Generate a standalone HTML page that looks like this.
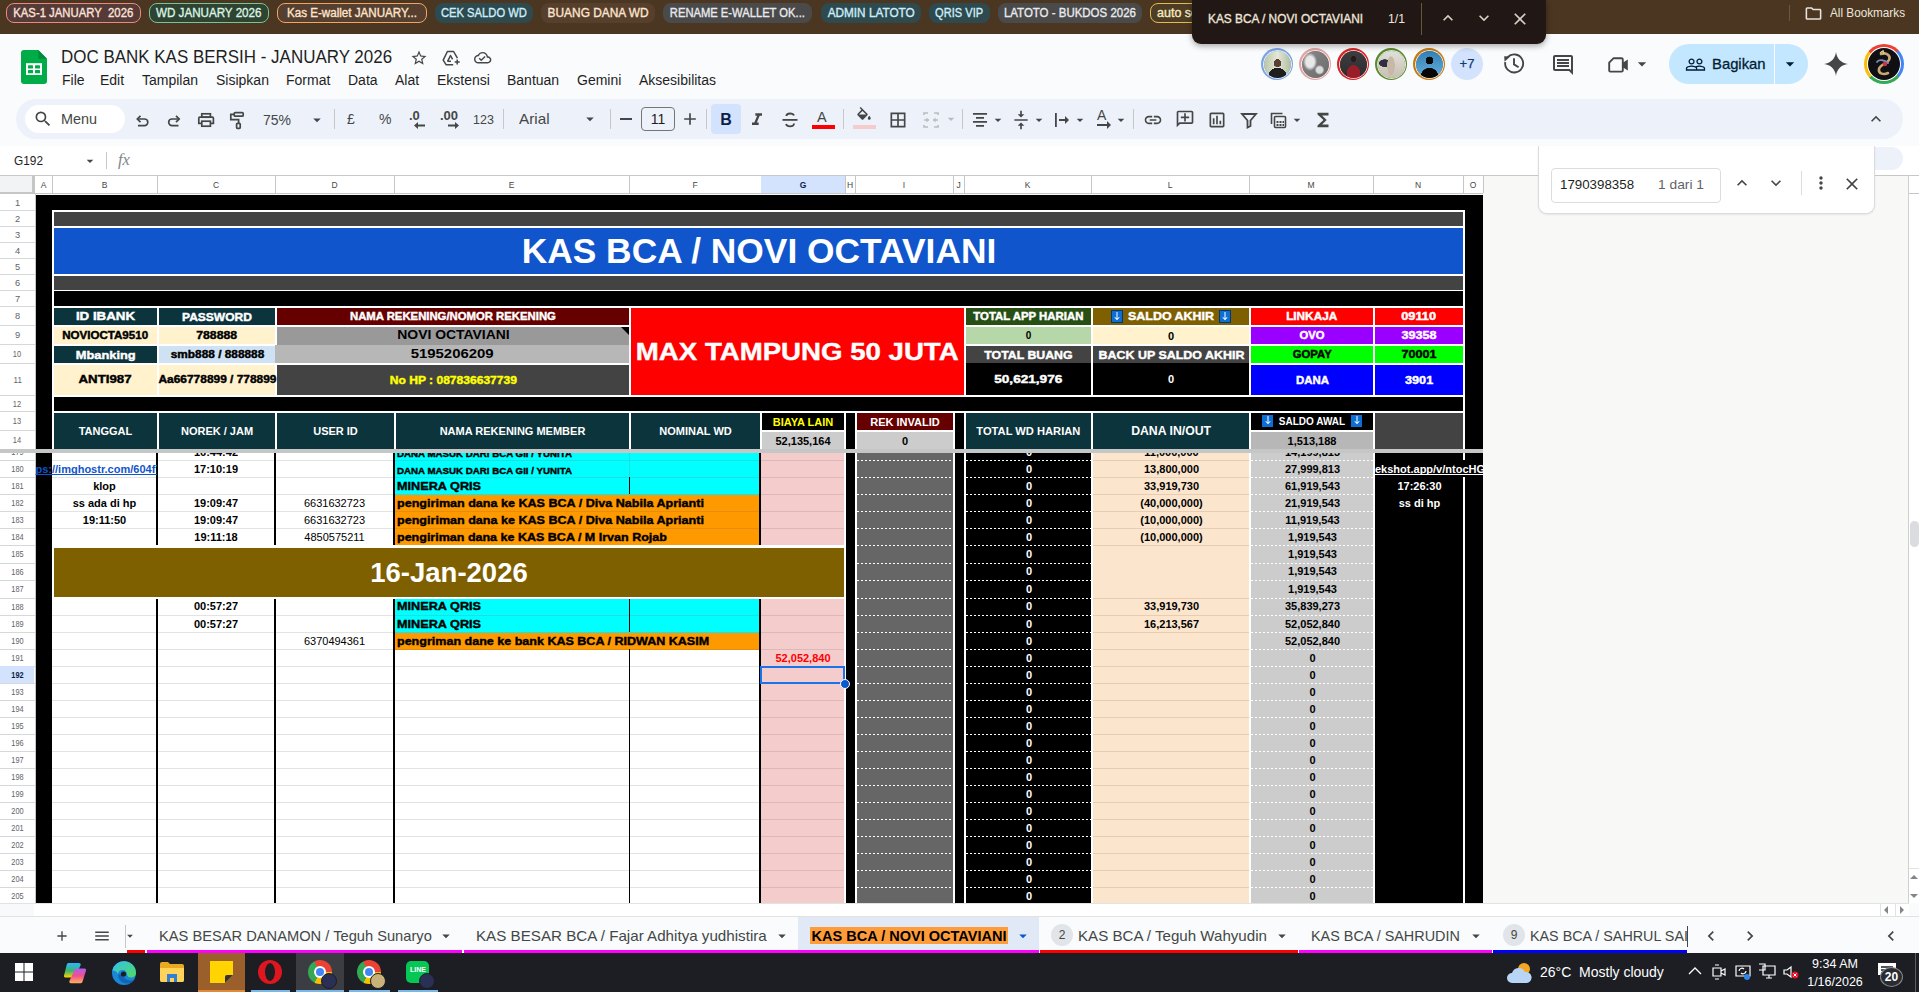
<!DOCTYPE html><html><head><meta charset="utf-8"><style>html,body{margin:0;padding:0}body{width:1919px;height:992px;overflow:hidden;position:relative;background:#f9fbfd;font-family:"Liberation Sans",sans-serif}body div,body svg{position:absolute}span{position:static}</style></head><body><div style="left:0px;top:0px;width:1919px;height:34px;background:#4b3621;"></div><div style="left:6px;top:3px;width:135px;height:20px;box-sizing:border-box;border-radius:8px;background:#563a37;border:1.5px solid #e98b7c;"></div><div style="left:6px;top:3px;width:135px;height:20px;display:flex;align-items:center;justify-content:center;font-size:12.5px;font-weight:normal;color:#fde3db;white-space:nowrap;-webkit-text-stroke:0.35px currentColor;"><span style="display:inline-block;transform:scaleX(0.906);transform-origin:center;">KAS-1 JANUARY  2026</span></div><div style="left:149px;top:3px;width:120px;height:20px;box-sizing:border-box;border-radius:8px;background:#2f4333;border:1.5px solid #78c493;"></div><div style="left:149px;top:3px;width:120px;height:20px;display:flex;align-items:center;justify-content:center;font-size:12.5px;font-weight:normal;color:#daf6e3;white-space:nowrap;-webkit-text-stroke:0.35px currentColor;"><span style="display:inline-block;transform:scaleX(0.930);transform-origin:center;">WD JANUARY 2026</span></div><div style="left:277px;top:3px;width:150px;height:20px;box-sizing:border-box;border-radius:8px;background:#563f2e;border:1.5px solid #f0a565;"></div><div style="left:277px;top:3px;width:150px;height:20px;display:flex;align-items:center;justify-content:center;font-size:12.5px;font-weight:normal;color:#fee5cf;white-space:nowrap;-webkit-text-stroke:0.35px currentColor;"><span style="display:inline-block;transform:scaleX(0.929);transform-origin:center;">Kas E-wallet JANUARY...</span></div><div style="left:435px;top:3px;width:98px;height:20px;box-sizing:border-box;border-radius:8px;background:#2e4a4e;"></div><div style="left:435px;top:3px;width:98px;height:20px;display:flex;align-items:center;justify-content:center;font-size:12.5px;font-weight:normal;color:#cdeefb;white-space:nowrap;-webkit-text-stroke:0.35px currentColor;"><span style="display:inline-block;transform:scaleX(0.897);transform-origin:center;">CEK SALDO WD</span></div><div style="left:541px;top:3px;width:114px;height:20px;box-sizing:border-box;border-radius:8px;background:#573f2d;"></div><div style="left:541px;top:3px;width:114px;height:20px;display:flex;align-items:center;justify-content:center;font-size:12.5px;font-weight:normal;color:#fee5cf;white-space:nowrap;-webkit-text-stroke:0.35px currentColor;"><span style="display:inline-block;transform:scaleX(0.951);transform-origin:center;">BUANG DANA WD</span></div><div style="left:663px;top:3px;width:149px;height:20px;box-sizing:border-box;border-radius:8px;background:#4a4a4a;"></div><div style="left:663px;top:3px;width:149px;height:20px;display:flex;align-items:center;justify-content:center;font-size:12.5px;font-weight:normal;color:#e9eaee;white-space:nowrap;-webkit-text-stroke:0.35px currentColor;"><span style="display:inline-block;transform:scaleX(0.896);transform-origin:center;">RENAME E-WALLET OK...</span></div><div style="left:821px;top:3px;width:100px;height:20px;box-sizing:border-box;border-radius:8px;background:#2e4a4e;"></div><div style="left:821px;top:3px;width:100px;height:20px;display:flex;align-items:center;justify-content:center;font-size:12.5px;font-weight:normal;color:#cdeefb;white-space:nowrap;-webkit-text-stroke:0.35px currentColor;"><span style="display:inline-block;transform:scaleX(0.942);transform-origin:center;">ADMIN LATOTO</span></div><div style="left:929px;top:3px;width:61px;height:20px;box-sizing:border-box;border-radius:8px;background:#2e4a4e;"></div><div style="left:929px;top:3px;width:61px;height:20px;display:flex;align-items:center;justify-content:center;font-size:12.5px;font-weight:normal;color:#cdeefb;white-space:nowrap;-webkit-text-stroke:0.35px currentColor;"><span style="display:inline-block;transform:scaleX(0.887);transform-origin:center;">QRIS VIP</span></div><div style="left:998px;top:3px;width:144px;height:20px;box-sizing:border-box;border-radius:8px;background:#4a4a4a;"></div><div style="left:998px;top:3px;width:144px;height:20px;display:flex;align-items:center;justify-content:center;font-size:12.5px;font-weight:normal;color:#e9eaee;white-space:nowrap;-webkit-text-stroke:0.35px currentColor;"><span style="display:inline-block;transform:scaleX(0.918);transform-origin:center;">LATOTO - BUKDOS 2026</span></div><div style="left:1150px;top:3px;width:90px;height:20px;box-sizing:border-box;border-radius:8px;background:#4c3d24;border:1.5px solid #e3bb4e;"></div><div style="left:1157px;top:4px;height:18px;line-height:18px;font-size:12.5px;font-weight:normal;color:#fbe9c0;white-space:nowrap;-webkit-text-stroke:0.35px currentColor;">auto sc</div><div style="left:1789px;top:5px;width:1px;height:16px;background:#6b5843;"></div><svg style="left:1803.5px;top:3.5px;" width="19" height="19" viewBox="0 0 24 24"><path fill="#e8e2da" d="M9.17 6l2 2H20v10H4V6h5.17M10 4H4c-1.1 0-1.99.9-1.99 2L2 18c0 1.1.9 2 2 2h16c1.1 0 2-.9 2-2V8c0-1.1-.9-2-2-2h-8l-2-2z"/></svg><div style="left:1830px;top:4px;height:18px;line-height:18px;font-size:13px;font-weight:normal;color:#ece6dd;white-space:nowrap;transform:scaleX(0.903);transform-origin:left center;">All Bookmarks</div><div style="left:0px;top:34px;width:1919px;height:112px;background:#f9fbfd;"></div><svg style="left:21px;top:50px" width="26" height="34" viewBox="0 0 26 34"><path d="M3 0h14.3L26 8.8V31a3 3 0 0 1-3 3H3a3 3 0 0 1-3-3V3a3 3 0 0 1 3-3z" fill="#00ac47"/><path d="M17.3 0L26 8.8h-8.7z" fill="#018b3a"/><rect x="5" y="13.2" width="16" height="11.8" fill="#fff"/><rect x="7" y="15.2" width="5" height="3.3" rx=".6" fill="#00ac47"/><rect x="14" y="15.2" width="5" height="3.3" rx=".6" fill="#00ac47"/><rect x="7" y="20" width="5" height="3.3" rx=".6" fill="#00ac47"/><rect x="14" y="20" width="5" height="3.3" rx=".6" fill="#00ac47"/></svg><div style="left:61px;top:45px;height:24px;line-height:24px;font-size:18px;font-weight:normal;color:#1f1f1f;white-space:nowrap;transform:scaleX(0.942);transform-origin:left center;">DOC BANK KAS BERSIH - JANUARY 2026</div><svg style="left:410.0px;top:48.8px;" width="18" height="18" viewBox="0 0 24 24"><path fill="#444746" d="M22 9.24l-7.19-.62L12 2 9.19 8.63 2 9.24l5.46 4.730L5.82 21 12 17.27 18.18 21l-1.63-7.03L22 9.24zM12 15.4l-3.76 2.27 1-4.28-3.32-2.88 4.38-.38L12 6.1l1.71 4.04 4.38.38-3.32 2.88 1 4.28L12 15.4z"/></svg><svg style="left:440px;top:47px" width="24" height="22" viewBox="440 47 24 22"><g fill="none" stroke="#444746" stroke-width="1.5" stroke-linejoin="round"><path d="M457.4 58.2L453.6 51.5H447.4L443.2 60.2L446.2 64.8H453.2"/><path d="M447.6 61.3L450.5 55.5L452.6 59.4"/><path d="M447.4 61.3H451"/><path d="M457.2 59.6V64.6M454.7 62.1H459.7"/></g></svg><svg style="left:474.3px;top:49.3px;" width="17.4" height="17.4" viewBox="0 0 24 24"><path fill="#444746" d="M19.35 10.04C18.67 6.59 15.64 4 12 4 9.11 4 6.6 5.64 5.35 8.04 2.34 8.36 0 10.91 0 14c0 3.31 2.69 6 6 6h13c2.76 0 5-2.24 5-5 0-2.64-2.05-4.78-4.65-4.96zM19 18H6c-2.21 0-4-1.79-4-4 0-2.05 1.53-3.76 3.56-3.97l1.07-.11.5-.95C8.080 7.14 9.94 6 12 6c2.62 0 4.88 1.86 5.39 4.43l.3 1.5 1.53.11c1.56.1 2.78 1.41 2.78 2.96 0 1.65-1.35 3-3 3zm-9-3.82l-2.09-2.09L6.5 13.5 10 17l6.01-6.01-1.41-1.41z"/></svg><div style="left:62px;top:71px;font-size:14px;color:#1f1f1f;line-height:18px;white-space:nowrap">File</div><div style="left:100px;top:71px;font-size:14px;color:#1f1f1f;line-height:18px;white-space:nowrap">Edit</div><div style="left:142px;top:71px;font-size:14px;color:#1f1f1f;line-height:18px;white-space:nowrap">Tampilan</div><div style="left:216px;top:71px;font-size:14px;color:#1f1f1f;line-height:18px;white-space:nowrap">Sisipkan</div><div style="left:286px;top:71px;font-size:14px;color:#1f1f1f;line-height:18px;white-space:nowrap">Format</div><div style="left:348px;top:71px;font-size:14px;color:#1f1f1f;line-height:18px;white-space:nowrap">Data</div><div style="left:395px;top:71px;font-size:14px;color:#1f1f1f;line-height:18px;white-space:nowrap">Alat</div><div style="left:437px;top:71px;font-size:14px;color:#1f1f1f;line-height:18px;white-space:nowrap">Ekstensi</div><div style="left:507px;top:71px;font-size:14px;color:#1f1f1f;line-height:18px;white-space:nowrap">Bantuan</div><div style="left:577px;top:71px;font-size:14px;color:#1f1f1f;line-height:18px;white-space:nowrap">Gemini</div><div style="left:639px;top:71px;font-size:14px;color:#1f1f1f;line-height:18px;white-space:nowrap">Aksesibilitas</div><div style="left:1261px;top:48px;width:32px;height:32px;border-radius:50%;background:#7ba5e6"></div><div style="left:1263.5px;top:50.5px;width:27px;height:27px;border-radius:50%;background:radial-gradient(ellipse 9px 8px at 50% 92%, #1e1e1e 0 98%, transparent 100%), radial-gradient(circle 4px at 50% 45%, #5a4030 0 95%, transparent 100%), linear-gradient(90deg,#b8c4a8,#e4e8d8 50%,#b0bca0);box-shadow:0 0 0 0.8px #fff"></div><div style="left:1299px;top:48px;width:32px;height:32px;border-radius:50%;background:#e3a3a3"></div><div style="left:1301.5px;top:50.5px;width:27px;height:27px;border-radius:50%;background:radial-gradient(ellipse 7px 9px at 30% 40%, #e8e8e8 0 60%, transparent 100%), radial-gradient(ellipse 5px 5px at 65% 70%, #dcdcdc 0 60%, transparent 100%), linear-gradient(135deg,#8a8a8a,#6a6a6a);box-shadow:0 0 0 0.8px #fff"></div><div style="left:1337px;top:48px;width:32px;height:32px;border-radius:50%;background:#d42424"></div><div style="left:1339.5px;top:50.5px;width:27px;height:27px;border-radius:50%;background:radial-gradient(ellipse 7px 9px at 50% 85%, #9a1e2a 0 95%, transparent 100%), radial-gradient(circle 3px at 50% 30%, #2a1a1a 0 95%, transparent 100%), linear-gradient(180deg,#3e3e42,#2c2c2e);box-shadow:0 0 0 0.8px #fff"></div><div style="left:1375px;top:48px;width:32px;height:32px;border-radius:50%;background:#5c8a2e"></div><div style="left:1377.5px;top:50.5px;width:27px;height:27px;border-radius:50%;background:radial-gradient(ellipse 4px 10px at 48% 55%, #c8b8a8 0 90%, transparent 100%), radial-gradient(ellipse 6px 4px at 25% 45%, #303040 0 90%, transparent 100%), linear-gradient(180deg,#e0e0dc,#c8c0b0);box-shadow:0 0 0 0.8px #fff"></div><div style="left:1413px;top:48px;width:32px;height:32px;border-radius:50%;background:#c47a12"></div><div style="left:1415.5px;top:50.5px;width:27px;height:27px;border-radius:50%;background:radial-gradient(ellipse 9px 9px at 50% 95%, #080808 0 95%, transparent 100%), radial-gradient(circle 4px at 50% 35%, #080808 0 95%, transparent 100%), linear-gradient(180deg,#2f7fb8,#6ab0d8);box-shadow:0 0 0 0.8px #fff"></div><div style="left:1451px;top:48px;width:32px;height:32px;border-radius:50%;background:#d3e3fd;color:#0b3a75;font-size:13px;-webkit-text-stroke:0.25px currentColor;line-height:32px;text-align:center">+7</div><svg style="left:1500px;top:50px" width="30" height="30" viewBox="1500 50 30 30"><g fill="none" stroke="#444746" stroke-width="1.9"><path d="M1505.2 62.2A9 9 0 1 0 1507.6 57.2"/><path d="M1514 58.2V64.4L1518.6 67.2"/></g><path fill="#444746" d="M1504.2 56.2L1510.2 56.4L1504.6 61.8z"/></svg><svg style="left:1551.0px;top:53.0px;" width="24" height="24" viewBox="0 0 24 24"><path fill="#444746" d="M21.99 4c0-1.1-.89-2-1.99-2H4c-1.1 0-2 .9-2 2v12c0 1.1.9 2 2 2h14l4 4-.01-18zM20 4v13.17L18.83 16H4V4h16zM6 12h12v2H6zm0-3h12v2H6zm0-3h12v2H6z"/></svg><svg style="left:1604px;top:54px" width="28" height="22" viewBox="1604 54 28 22"><path fill="none" stroke="#444746" stroke-width="1.9" stroke-linejoin="round" d="M1613.6 58.2H1621.6a1.2 1.2 0 0 1 1.2 1.2V70.4a1.2 1.2 0 0 1-1.2 1.2H1610.4a1.2 1.2 0 0 1-1.2-1.2V62.6z"/><path fill="#444746" d="M1622.8 62.8L1627.8 59.6V70.4L1622.8 67.2z"/></svg><svg style="left:1632.0px;top:54.0px;" width="20" height="20" viewBox="0 0 24 24"><path fill="#444746" d="M7 10l5 5 5-5z"/></svg><div style="left:1669px;top:44px;width:139px;height:40px;border-radius:20px;background:#c2e7ff"></div><div style="left:1774px;top:44px;width:1px;height:40px;background:#f9fbfd;"></div><svg style="left:1685.0px;top:53.5px;" width="21" height="21" viewBox="0 0 24 24"><path fill="#001d35" d="M16.5 13c-1.2 0-3.07.34-4.5 1-1.43-.67-3.3-1-4.5-1C5.33 13 1 14.08 1 16.25V19h22v-2.75c0-2.170-4.33-3.25-6.5-3.25zm-4 4.5h-10v-1.25c0-.54 2.56-1.75 5-1.75s5 1.21 5 1.75v1.25zm9 0H14v-1.25c0-.46-.2-.86-.52-1.22.88-.3 1.96-.53 3.02-.53 2.44 0 5 1.21 5 1.75v1.25zM7.5 12c1.93 0 3.5-1.57 3.5-3.5S9.43 5 7.5 5 4 6.57 4 8.5 5.57 12 7.5 12zm0-5.5c1.1 0 2 .9 2 2s-.9 2-2 2-2-.9-2-2 .9-2 2-2zm9 5.5c1.93 0 3.5-1.57 3.5-3.5S18.43 5 16.5 5 13 6.57 13 8.5s1.57 3.5 3.5 3.5zm0-5.5c1.1 0 2 .9 2 2s-.9 2-2 2-2-.9-2-2 .9-2 2-2z"/></svg><div style="left:1712px;top:54px;height:20px;line-height:20px;font-size:15px;font-weight:normal;color:#001d35;white-space:nowrap;transform:scaleX(0.988);transform-origin:left center;-webkit-text-stroke:0.3px currentColor;">Bagikan</div><svg style="left:1780.0px;top:54.0px;" width="20" height="20" viewBox="0 0 24 24"><path fill="#001d35" d="M7 10l5 5 5-5z"/></svg><svg style="left:1823px;top:51px" width="26" height="26" viewBox="0 0 24 24"><path fill="#444746" d="M12 1C12.6 7 17 11.4 23 12 17 12.6 12.6 17 12 23 11.4 17 7 12.6 1 12 7 11.4 11.4 7 12 1z"/></svg><div style="left:1864px;top:44px;width:40px;height:40px;border-radius:50%;background:conic-gradient(from -50deg,#ea4335 0 27%,#4285f4 27% 50%,#34a853 50% 77%,#fbbc04 77% 100%)"></div><div style="left:1867px;top:47px;width:34px;height:34px;border-radius:50%;background:#fff"></div><div style="left:1868px;top:48px;width:32px;height:32px;border-radius:50%;background:#101014"></div><svg style="left:1868px;top:48px" width="32" height="32" viewBox="0 0 32 32"><g fill="none" stroke="#c8a870" stroke-width="2.6" stroke-linecap="round"><path d="M13 6c6-2 10 2 8 6s-9 4-10 9 5 6 9 4"/><path d="M9 14c2-3 8-2 11 1" stroke="#7a8ab8" stroke-width="1.8"/></g><circle cx="17" cy="16" r="2.2" fill="#d03040"/><path d="M12 5l3-2 1 3" stroke="#e0c890" stroke-width="1.5" fill="none"/></svg><div style="left:1192px;top:0px;width:354px;height:44px;background:#211815;border-radius:0 0 9px 9px;box-shadow:0 2px 6px rgba(0,0,0,.35)"></div><div style="left:1208px;top:10px;height:18px;line-height:18px;font-size:13px;font-weight:normal;color:#efe6dc;white-space:nowrap;transform:scaleX(0.912);transform-origin:left center;-webkit-text-stroke:0.35px currentColor;">KAS BCA / NOVI OCTAVIANI</div><div style="left:1388px;top:10px;height:18px;line-height:18px;font-size:12.5px;font-weight:normal;color:#efe6dc;white-space:nowrap;transform:scaleX(0.978);transform-origin:left center;">1/1</div><div style="left:1421px;top:3px;width:1px;height:32px;background:#6b5535;"></div><svg style="left:1438.0px;top:8.0px;" width="20" height="20" viewBox="0 0 24 24"><path fill="#d9d0c6" d="M12 8l-6 6 1.41 1.41L12 10.83l4.59 4.58L18 14z"/></svg><svg style="left:1474.0px;top:8.0px;" width="20" height="20" viewBox="0 0 24 24"><path fill="#d9d0c6" d="M16.59 8.59L12 13.17 7.41 8.59 6 10l6 6 6-6z"/></svg><svg style="left:1510.0px;top:9.0px;" width="20" height="20" viewBox="0 0 24 24"><path fill="#d9d0c6" d="M19 6.41L17.59 5 12 10.59 6.41 5 5 6.41 10.59 12 5 17.59 6.41 19 12 13.41 17.59 19 19 17.59 13.41 12z"/></svg><div style="left:16px;top:99px;width:1887px;height:40px;border-radius:20px;background:#edf2fa"></div><div style="left:25px;top:105px;width:100px;height:28px;border-radius:14px;background:#fff"></div><svg style="left:33.0px;top:109.0px;" width="20" height="20" viewBox="0 0 24 24"><path fill="#444746" d="M15.5 14h-.79l-.28-.27A6.471 6.471 0 0 0 16 9.5 6.5 6.5 0 1 0 9.5 16c1.61 0 3.09-.59 4.23-1.57l.27.28v.79l5 4.99L20.49 19l-4.99-5zm-6 0C7.01 14 5 11.99 5 9.5S7.01 5 9.5 5 14 7.01 14 9.5 11.99 14 9.5 14z"/></svg><div style="left:61px;top:110px;height:18px;line-height:18px;font-size:14px;font-weight:normal;color:#444746;white-space:nowrap;transform:scaleX(1.029);transform-origin:left center;">Menu</div><svg style="left:130px;top:108px" width="120" height="24" viewBox="130 108 120 24"><g fill="none" stroke="#444746" stroke-width="1.7"><path d="M137.5 119H144.5a3.3 3.3 0 0 1 0 6.6H138"/><path d="M140.5 115.8L137.3 119l3.2 3.2"/><path d="M179 119H172a3.3 3.3 0 0 0 0 6.6H178.5"/><path d="M176 115.8L179.2 119 176 122.2"/><rect x="201.8" y="113.8" width="8.6" height="3.4"/><path d="M201.5 123.4H198.8V118.2a1 1 0 0 1 1-1H212.4a1 1 0 0 1 1 1V123.4H210.6"/><rect x="201.8" y="121.2" width="8.6" height="5"/><rect x="234.2" y="112.6" width="9" height="3.6" rx="1"/><path d="M234 114.4H230.8V119.6H238.6V123.2"/><rect x="236.6" y="123.4" width="3.6" height="5" rx="0.8"/></g></svg><div style="left:263px;top:111px;height:18px;line-height:18px;font-size:14px;font-weight:normal;color:#444746;white-space:nowrap;">75%</div><svg style="left:308.0px;top:111.0px;" width="18" height="18" viewBox="0 0 24 24"><path fill="#444746" d="M7 10l5 5 5-5z"/></svg><div style="left:334px;top:109px;width:1px;height:20px;background:#c7c7c7;"></div><div style="left:503px;top:109px;width:1px;height:20px;background:#c7c7c7;"></div><div style="left:610px;top:109px;width:1px;height:20px;background:#c7c7c7;"></div><div style="left:706px;top:109px;width:1px;height:20px;background:#c7c7c7;"></div><div style="left:843px;top:109px;width:1px;height:20px;background:#c7c7c7;"></div><div style="left:962px;top:109px;width:1px;height:20px;background:#c7c7c7;"></div><div style="left:1133px;top:109px;width:1px;height:20px;background:#c7c7c7;"></div><div style="left:347px;top:110px;font-size:14px;color:#444746;line-height:18px">£</div><div style="left:379px;top:110px;font-size:14px;color:#444746;line-height:18px">%</div><div style="left:409px;top:108px;font-size:13px;font-weight:bold;color:#444746;line-height:16px">.0</div><svg style="left:413px;top:121px" width="14" height="9" viewBox="0 0 14 9"><path fill="#444746" d="M1 4.5L5 1v2.5h7v2H5V8z"/></svg><div style="left:440px;top:108px;font-size:13px;font-weight:bold;color:#444746;line-height:16px">.00</div><svg style="left:446px;top:121px" width="14" height="9" viewBox="0 0 14 9"><path fill="#444746" d="M13 4.5L9 1v2.5H2v2h7V8z"/></svg><div style="left:473px;top:111px;font-size:12.5px;color:#444746;line-height:18px">123</div><div style="left:519px;top:110px;height:18px;line-height:18px;font-size:14.5px;font-weight:normal;color:#444746;white-space:nowrap;transform:scaleX(1.052);transform-origin:left center;">Arial</div><svg style="left:581.0px;top:110.0px;" width="18" height="18" viewBox="0 0 24 24"><path fill="#444746" d="M7 10l5 5 5-5z"/></svg><div style="left:620px;top:118px;width:12px;height:2px;background:#444746;"></div><div style="left:641px;top:107px;width:34px;height:24px;box-sizing:border-box;border:1px solid #747775;border-radius:4px;font-size:14px;color:#1f1f1f;line-height:22px;text-align:center">11</div><svg style="left:680.0px;top:109.0px;" width="20" height="20" viewBox="0 0 24 24"><path fill="#444746" d="M19 13h-6v6h-2v-6H5v-2h6V5h2v6h6v2z"/></svg><div style="left:711px;top:104px;width:30px;height:30px;border-radius:4px;background:#d3e3fd;color:#0b1f4a;font-size:16px;font-weight:bold;line-height:32px;text-align:center">B</div><svg style="left:747.0px;top:110.0px;" width="20" height="20" viewBox="0 0 24 24"><path fill="#444746" d="M10 4v3h2.21l-3.42 8H6v3h8v-3h-2.21l3.42-8H18V4z"/></svg><svg style="left:780px;top:110px" width="20" height="20" viewBox="0 0 20 20"><path fill="none" stroke="#444746" stroke-width="1.8" d="M14 5.5c-.5-1.2-2-2-4-2s-3.6 1-3.6 2.6M6 14c.4 1.4 2 2.4 4 2.4s4-1 4-2.8"/><rect x="2.5" y="9" width="15" height="1.8" fill="#444746"/></svg><div style="left:817px;top:108.5px;font-size:14.5px;color:#444746;line-height:16px">A</div><div style="left:812px;top:125px;width:23px;height:4px;background:#ff0000;"></div><svg style="left:855.0px;top:107.0px;" width="18" height="18" viewBox="0 0 24 24"><path fill="#444746" d="M16.56 8.94L7.62 0 6.21 1.41l2.38 2.38-5.15 5.15c-.59.59-.59 1.54 0 2.12l5.5 5.5c.29.29.68.44 1.06.44s.77-.15 1.06-.44l5.5-5.5c.59-.58.59-1.53 0-2.12zM5.21 10L10 5.21 14.79 10H5.21zM19 11.5s-2 2.17-2 3.5c0 1.1.9 2 2 2s2-.9 2-2c0-1.33-2-3.5-2-3.5z"/></svg><div style="left:853px;top:125px;width:23px;height:4px;background:#f4cccc;"></div><svg style="left:888.0px;top:110.0px;" width="20" height="20" viewBox="0 0 24 24"><path fill="#444746" d="M3 3v18h18V3H3zm8 16H5v-6h6v6zm0-8H5V5h6v6zm8 8h-6v-6h6v6zm0-8h-6V5h6v6z"/></svg><svg style="left:921px;top:110px" width="20" height="20" viewBox="0 0 20 20"><path fill="none" stroke="#b9bcbf" stroke-width="1.6" d="M3 5V3h4M3 15v2h4M17 5V3h-4M17 15v2h-4M3 10h5M17 10h-5"/><path fill="#b9bcbf" d="M8 10l-2.5-2.5v5zM12 10l2.5-2.5v5z"/></svg><svg style="left:943.0px;top:111.0px;" width="16" height="16" viewBox="0 0 24 24"><path fill="#b9bcbf" d="M7 10l5 5 5-5z"/></svg><svg style="left:970px;top:110px" width="20" height="20" viewBox="0 0 20 20"><path fill="#444746" d="M3 3h14v1.8H3zM6 7h8v1.8H6zM3 11h14v1.8H3zM6 15h8v1.8H6z"/></svg><svg style="left:990.0px;top:112.0px;" width="16" height="16" viewBox="0 0 24 24"><path fill="#444746" d="M7 10l5 5 5-5z"/></svg><svg style="left:1011.0px;top:110.0px;" width="20" height="20" viewBox="0 0 24 24"><path fill="#444746" d="M8 19h3v4h2v-4h3l-4-4-4 4zm8-14h-3V1h-2v4H8l4 4 4-4zM4 11v2h16v-2H4z"/></svg><svg style="left:1031.0px;top:112.0px;" width="16" height="16" viewBox="0 0 24 24"><path fill="#444746" d="M7 10l5 5 5-5z"/></svg><svg style="left:1052px;top:110px" width="20" height="20" viewBox="0 0 20 20"><path fill="#444746" d="M3 3h1.8v14H3zM7 9h6V6l4 4-4 4v-3H7z"/></svg><svg style="left:1072.0px;top:112.0px;" width="16" height="16" viewBox="0 0 24 24"><path fill="#444746" d="M7 10l5 5 5-5z"/></svg><div style="left:1097px;top:107px;font-size:14px;color:#444746;line-height:16px">A</div><svg style="left:1096px;top:121px" width="16" height="8" viewBox="0 0 16 8"><path fill="#444746" d="M1 3h10V0l4 4-4 4V5H1z"/></svg><svg style="left:1113.0px;top:112.0px;" width="16" height="16" viewBox="0 0 24 24"><path fill="#444746" d="M7 10l5 5 5-5z"/></svg><svg style="left:1143.0px;top:110.0px;" width="20" height="20" viewBox="0 0 24 24"><path fill="#444746" d="M3.9 12c0-1.71 1.39-3.1 3.1-3.1h4V7H7c-2.76 0-5 2.24-5 5s2.24 5 5 5h4v-1.9H7c-1.71 0-3.1-1.39-3.1-3.1zM8 13h8v-2H8v2zm9-6h-4v1.9h4c1.71 0 3.1 1.39 3.1 3.1s-1.39 3.1-3.1 3.1h-4V17h4c2.76 0 5-2.24 5-5s-2.24-5-5-5z"/></svg><svg style="left:1175.0px;top:109.0px;" width="20" height="20" viewBox="0 0 24 24"><path fill="#444746" d="M20 2H4c-1.1 0-2 .9-2 2v18l4-4h14c1.1 0 2-.9 2-2V4c0-1.1-.9-2-2-2zm0 14H5.17L4 17.17V4h16v12zM11 5h2v4h4v2h-4v4h-2v-4H7V9h4z"/></svg><svg style="left:1207.0px;top:110.0px;" width="20" height="20" viewBox="0 0 24 24"><path fill="#444746" d="M19 3H5c-1.1 0-2 .9-2 2v14c0 1.1.9 2 2 2h14c1.1 0 2-.9 2-2V5c0-1.1-.9-2-2-2zm0 16H5V5h14v14zM7 10h2v7H7zm4-3h2v10h-2zm4 6h2v4h-2z"/></svg><svg style="left:1239px;top:110px" width="20" height="20" viewBox="0 0 20 20"><path fill="none" stroke="#444746" stroke-width="1.8" d="M3 4h14l-5.5 6.5V16l-3 1.5v-7z"/></svg><svg style="left:1269px;top:110px" width="20" height="20" viewBox="0 0 20 20"><path fill="none" stroke="#444746" stroke-width="1.6" d="M2.5 14V3.5h11"/><rect x="5.5" y="6.5" width="11" height="11" rx="1" fill="none" stroke="#444746" stroke-width="1.6"/><path fill="#444746" d="M7.5 11h2v2h-2zM10.5 11h2v2h-2zM13.5 11h1.5v2h-1.5zM7.5 14h2v2h-2zM10.5 14h2v2h-2zM13.5 14h1.5v2h-1.5z"/></svg><svg style="left:1289.0px;top:112.0px;" width="16" height="16" viewBox="0 0 24 24"><path fill="#444746" d="M7 10l5 5 5-5z"/></svg><svg style="left:1312.0px;top:109.0px;" width="22" height="22" viewBox="0 0 24 24"><path fill="#444746" d="M18 4H6v2l6.5 6L6 18v2h12v-3h-7l5-5-5-5h7z"/></svg><svg style="left:1866.0px;top:109.0px;" width="20" height="20" viewBox="0 0 24 24"><path fill="#444746" d="M12 8l-6 6 1.41 1.41L12 10.83l4.59 4.58L18 14z"/></svg><div style="left:0px;top:146px;width:1919px;height:29px;background:#ffffff;"></div><div style="left:0px;top:175px;width:1919px;height:1px;background:#c7c7c7;"></div><div style="left:14px;top:152px;height:18px;line-height:18px;font-size:13.5px;font-weight:normal;color:#1f1f1f;white-space:nowrap;transform:scaleX(0.877);transform-origin:left center;">G192</div><svg style="left:82.0px;top:153.0px;" width="16" height="16" viewBox="0 0 24 24"><path fill="#444746" d="M7 10l5 5 5-5z"/></svg><div style="left:106px;top:152px;width:1px;height:17px;background:#c7c7c7;"></div><div style="left:118px;top:150px;font-size:16.5px;font-style:italic;color:#80868b;font-family:'Liberation Serif',serif;line-height:20px">fx</div><div style="left:1846px;top:147px;width:57px;height:23px;border-radius:0 12px 12px 0;background:#edf2fa"></div><div style="left:0px;top:176px;width:1909px;height:727px;background:#f8f9f7;"></div><div style="left:0px;top:176px;width:1483px;height:18px;background:#ffffff;"></div><div style="left:0px;top:176px;width:34px;height:18px;background:#f1f3f4;"></div><div style="left:32px;top:176px;width:3px;height:18px;background:#c4c7c5;"></div><div style="left:0px;top:192px;width:35px;height:2px;background:#c4c7c5;"></div><div style="left:35px;top:193px;width:1448px;height:1px;background:#c4c7c5;"></div><div style="left:52px;top:176px;width:1px;height:17px;background:#c4c7c5;"></div><div style="left:35px;top:176.5px;width:17px;height:17px;display:flex;align-items:center;justify-content:center;font-size:8.5px;font-weight:normal;color:#444746;white-space:nowrap;"><span style="display:inline-block;">A</span></div><div style="left:157px;top:176px;width:1px;height:17px;background:#c4c7c5;"></div><div style="left:52px;top:176.5px;width:105px;height:17px;display:flex;align-items:center;justify-content:center;font-size:8.5px;font-weight:normal;color:#444746;white-space:nowrap;"><span style="display:inline-block;">B</span></div><div style="left:275px;top:176px;width:1px;height:17px;background:#c4c7c5;"></div><div style="left:157px;top:176.5px;width:118px;height:17px;display:flex;align-items:center;justify-content:center;font-size:8.5px;font-weight:normal;color:#444746;white-space:nowrap;"><span style="display:inline-block;">C</span></div><div style="left:394px;top:176px;width:1px;height:17px;background:#c4c7c5;"></div><div style="left:275px;top:176.5px;width:119px;height:17px;display:flex;align-items:center;justify-content:center;font-size:8.5px;font-weight:normal;color:#444746;white-space:nowrap;"><span style="display:inline-block;">D</span></div><div style="left:629px;top:176px;width:1px;height:17px;background:#c4c7c5;"></div><div style="left:394px;top:176.5px;width:235px;height:17px;display:flex;align-items:center;justify-content:center;font-size:8.5px;font-weight:normal;color:#444746;white-space:nowrap;"><span style="display:inline-block;">E</span></div><div style="left:761px;top:176px;width:1px;height:17px;background:#c4c7c5;"></div><div style="left:629px;top:176.5px;width:132px;height:17px;display:flex;align-items:center;justify-content:center;font-size:8.5px;font-weight:normal;color:#444746;white-space:nowrap;"><span style="display:inline-block;">F</span></div><div style="left:761px;top:176px;width:84px;height:17px;background:#d3e3fd;"></div><div style="left:845px;top:176px;width:1px;height:17px;background:#c4c7c5;"></div><div style="left:761px;top:176.5px;width:84px;height:17px;display:flex;align-items:center;justify-content:center;font-size:8.5px;font-weight:bold;color:#0b1f4a;white-space:nowrap;"><span style="display:inline-block;">G</span></div><div style="left:855px;top:176px;width:1px;height:17px;background:#c4c7c5;"></div><div style="left:845px;top:176.5px;width:10px;height:17px;display:flex;align-items:center;justify-content:center;font-size:8.5px;font-weight:normal;color:#444746;white-space:nowrap;"><span style="display:inline-block;">H</span></div><div style="left:953px;top:176px;width:1px;height:17px;background:#c4c7c5;"></div><div style="left:855px;top:176.5px;width:98px;height:17px;display:flex;align-items:center;justify-content:center;font-size:8.5px;font-weight:normal;color:#444746;white-space:nowrap;"><span style="display:inline-block;">I</span></div><div style="left:964px;top:176px;width:1px;height:17px;background:#c4c7c5;"></div><div style="left:953px;top:176.5px;width:11px;height:17px;display:flex;align-items:center;justify-content:center;font-size:8.5px;font-weight:normal;color:#444746;white-space:nowrap;"><span style="display:inline-block;">J</span></div><div style="left:1091px;top:176px;width:1px;height:17px;background:#c4c7c5;"></div><div style="left:964px;top:176.5px;width:127px;height:17px;display:flex;align-items:center;justify-content:center;font-size:8.5px;font-weight:normal;color:#444746;white-space:nowrap;"><span style="display:inline-block;">K</span></div><div style="left:1249px;top:176px;width:1px;height:17px;background:#c4c7c5;"></div><div style="left:1091px;top:176.5px;width:158px;height:17px;display:flex;align-items:center;justify-content:center;font-size:8.5px;font-weight:normal;color:#444746;white-space:nowrap;"><span style="display:inline-block;">L</span></div><div style="left:1373px;top:176px;width:1px;height:17px;background:#c4c7c5;"></div><div style="left:1249px;top:176.5px;width:124px;height:17px;display:flex;align-items:center;justify-content:center;font-size:8.5px;font-weight:normal;color:#444746;white-space:nowrap;"><span style="display:inline-block;">M</span></div><div style="left:1463px;top:176px;width:1px;height:17px;background:#c4c7c5;"></div><div style="left:1373px;top:176.5px;width:90px;height:17px;display:flex;align-items:center;justify-content:center;font-size:8.5px;font-weight:normal;color:#444746;white-space:nowrap;"><span style="display:inline-block;">N</span></div><div style="left:1483px;top:176px;width:1px;height:17px;background:#c4c7c5;"></div><div style="left:1463px;top:176.5px;width:20px;height:17px;display:flex;align-items:center;justify-content:center;font-size:8.5px;font-weight:normal;color:#444746;white-space:nowrap;"><span style="display:inline-block;">O</span></div><div style="left:1909px;top:176px;width:10px;height:18px;background:#ffffff;"></div><div style="left:1908px;top:176px;width:1px;height:727px;background:#d0d0d0;"></div><div style="left:1909px;top:193px;width:10px;height:1px;background:#c4c7c5;"></div><div style="left:0px;top:194px;width:35px;height:709px;background:#ffffff;"></div><div style="left:34.5px;top:194px;width:1.5px;height:723px;background:#c4c7c5;"></div><div style="left:0px;top:210px;width:34.5px;height:1px;background:#d6d8da;"></div><div style="left:0px;top:194.5px;width:34.5px;height:16px;display:flex;align-items:center;justify-content:center;font-size:9px;font-weight:normal;color:#5f6368;white-space:nowrap;"><span style="display:inline-block;transform:scaleX(1.032);transform-origin:center;">1</span></div><div style="left:0px;top:226px;width:34.5px;height:1px;background:#d6d8da;"></div><div style="left:0px;top:210.5px;width:34.5px;height:16px;display:flex;align-items:center;justify-content:center;font-size:9px;font-weight:normal;color:#5f6368;white-space:nowrap;"><span style="display:inline-block;transform:scaleX(1.032);transform-origin:center;">2</span></div><div style="left:0px;top:242px;width:34.5px;height:1px;background:#d6d8da;"></div><div style="left:0px;top:226.5px;width:34.5px;height:16px;display:flex;align-items:center;justify-content:center;font-size:9px;font-weight:normal;color:#5f6368;white-space:nowrap;"><span style="display:inline-block;transform:scaleX(1.032);transform-origin:center;">3</span></div><div style="left:0px;top:258px;width:34.5px;height:1px;background:#d6d8da;"></div><div style="left:0px;top:242.5px;width:34.5px;height:16px;display:flex;align-items:center;justify-content:center;font-size:9px;font-weight:normal;color:#5f6368;white-space:nowrap;"><span style="display:inline-block;transform:scaleX(1.032);transform-origin:center;">4</span></div><div style="left:0px;top:274px;width:34.5px;height:1px;background:#d6d8da;"></div><div style="left:0px;top:258.5px;width:34.5px;height:16px;display:flex;align-items:center;justify-content:center;font-size:9px;font-weight:normal;color:#5f6368;white-space:nowrap;"><span style="display:inline-block;transform:scaleX(1.032);transform-origin:center;">5</span></div><div style="left:0px;top:290px;width:34.5px;height:1px;background:#d6d8da;"></div><div style="left:0px;top:274.5px;width:34.5px;height:16px;display:flex;align-items:center;justify-content:center;font-size:9px;font-weight:normal;color:#5f6368;white-space:nowrap;"><span style="display:inline-block;transform:scaleX(1.032);transform-origin:center;">6</span></div><div style="left:0px;top:306px;width:34.5px;height:1px;background:#d6d8da;"></div><div style="left:0px;top:290.5px;width:34.5px;height:16px;display:flex;align-items:center;justify-content:center;font-size:9px;font-weight:normal;color:#5f6368;white-space:nowrap;"><span style="display:inline-block;transform:scaleX(1.032);transform-origin:center;">7</span></div><div style="left:0px;top:325px;width:34.5px;height:1px;background:#d6d8da;"></div><div style="left:0px;top:306.5px;width:34.5px;height:19px;display:flex;align-items:center;justify-content:center;font-size:9px;font-weight:normal;color:#5f6368;white-space:nowrap;"><span style="display:inline-block;transform:scaleX(1.032);transform-origin:center;">8</span></div><div style="left:0px;top:344px;width:34.5px;height:1px;background:#d6d8da;"></div><div style="left:0px;top:325.5px;width:34.5px;height:19px;display:flex;align-items:center;justify-content:center;font-size:9px;font-weight:normal;color:#5f6368;white-space:nowrap;"><span style="display:inline-block;transform:scaleX(1.032);transform-origin:center;">9</span></div><div style="left:0px;top:363px;width:34.5px;height:1px;background:#d6d8da;"></div><div style="left:0px;top:344.5px;width:34.5px;height:19px;display:flex;align-items:center;justify-content:center;font-size:9px;font-weight:normal;color:#5f6368;white-space:nowrap;"><span style="display:inline-block;transform:scaleX(0.831);transform-origin:center;">10</span></div><div style="left:0px;top:395px;width:34.5px;height:1px;background:#d6d8da;"></div><div style="left:0px;top:363.5px;width:34.5px;height:32px;display:flex;align-items:center;justify-content:center;font-size:9px;font-weight:normal;color:#5f6368;white-space:nowrap;"><span style="display:inline-block;transform:scaleX(0.887);transform-origin:center;">11</span></div><div style="left:0px;top:411px;width:34.5px;height:1px;background:#d6d8da;"></div><div style="left:0px;top:395.5px;width:34.5px;height:16px;display:flex;align-items:center;justify-content:center;font-size:9px;font-weight:normal;color:#5f6368;white-space:nowrap;"><span style="display:inline-block;transform:scaleX(0.831);transform-origin:center;">12</span></div><div style="left:0px;top:430px;width:34.5px;height:1px;background:#d6d8da;"></div><div style="left:0px;top:411.5px;width:34.5px;height:19px;display:flex;align-items:center;justify-content:center;font-size:9px;font-weight:normal;color:#5f6368;white-space:nowrap;"><span style="display:inline-block;transform:scaleX(0.831);transform-origin:center;">13</span></div><div style="left:0px;top:449px;width:34.5px;height:1px;background:#d6d8da;"></div><div style="left:0px;top:430.5px;width:34.5px;height:19px;display:flex;align-items:center;justify-content:center;font-size:9px;font-weight:normal;color:#5f6368;white-space:nowrap;"><span style="display:inline-block;transform:scaleX(0.831);transform-origin:center;">14</span></div><div style="left:36px;top:195px;width:1447px;height:254px;background:#000000;"></div><div style="left:52px;top:210px;width:1413px;height:239px;background:#ffffff;"></div><div style="left:54px;top:212px;width:1409px;height:14px;background:#434343;"></div><div style="left:54px;top:228px;width:1409px;height:45.5px;background:#1155cc;"></div><div style="left:54px;top:228px;width:1409px;height:45.5px;display:flex;align-items:center;justify-content:center;font-size:35px;font-weight:bold;color:#fff;white-space:nowrap;"><span style="display:inline-block;transform:scaleX(1.010);transform-origin:center;">KAS BCA / NOVI OCTAVIANI</span></div><div style="left:54px;top:275.5px;width:1409px;height:14.0px;background:#434343;"></div><div style="left:54px;top:291px;width:1409px;height:15px;background:#000;"></div><div style="left:54px;top:308px;width:103px;height:17px;background:#0c343d;"></div><div style="left:54px;top:307.5px;width:103px;height:17px;display:flex;align-items:center;justify-content:center;font-size:11px;font-weight:bold;color:#fff;white-space:nowrap;"><span style="display:inline-block;transform:scaleX(1.208);transform-origin:center;-webkit-text-stroke:0.4px currentColor;">ID IBANK</span></div><div style="left:159px;top:308px;width:116px;height:17px;background:#0c343d;"></div><div style="left:159px;top:308px;width:116px;height:17px;display:flex;align-items:center;justify-content:center;font-size:11px;font-weight:bold;color:#fff;white-space:nowrap;"><span style="display:inline-block;transform:scaleX(1.093);transform-origin:center;-webkit-text-stroke:0.4px currentColor;">PASSWORD</span></div><div style="left:54px;top:327px;width:103px;height:17px;background:#fff2cc;"></div><div style="left:54px;top:327px;width:103px;height:17px;display:flex;align-items:center;justify-content:center;font-size:10px;font-weight:bold;color:#000;white-space:nowrap;"><span style="display:inline-block;transform:scaleX(1.157);transform-origin:center;-webkit-text-stroke:0.4px currentColor;">NOVIOCTA9510</span></div><div style="left:159px;top:327px;width:116px;height:17px;background:#fff2cc;"></div><div style="left:159px;top:327px;width:116px;height:17px;display:flex;align-items:center;justify-content:center;font-size:10px;font-weight:bold;color:#000;white-space:nowrap;"><span style="display:inline-block;transform:scaleX(1.228);transform-origin:center;-webkit-text-stroke:0.4px currentColor;">788888</span></div><div style="left:54px;top:346px;width:103px;height:17px;background:#0c343d;"></div><div style="left:54px;top:346px;width:103px;height:17px;display:flex;align-items:center;justify-content:center;font-size:11px;font-weight:bold;color:#fff;white-space:nowrap;"><span style="display:inline-block;transform:scaleX(1.168);transform-origin:center;-webkit-text-stroke:0.4px currentColor;">Mbanking</span></div><div style="left:159px;top:346px;width:116px;height:17px;background:#cfe2f3;"></div><div style="left:159px;top:346px;width:116px;height:17px;display:flex;align-items:center;justify-content:center;font-size:10px;font-weight:bold;color:#000;white-space:nowrap;"><span style="display:inline-block;transform:scaleX(1.185);transform-origin:center;-webkit-text-stroke:0.4px currentColor;">smb888 / 888888</span></div><div style="left:54px;top:365px;width:103px;height:29.5px;background:#fff2cc;"></div><div style="left:54px;top:364px;width:103px;height:29.5px;display:flex;align-items:center;justify-content:center;font-size:11px;font-weight:bold;color:#000;white-space:nowrap;"><span style="display:inline-block;transform:scaleX(1.205);transform-origin:center;-webkit-text-stroke:0.4px currentColor;">ANTI987</span></div><div style="left:159px;top:365px;width:116px;height:29.5px;background:#fff2cc;"></div><div style="left:159px;top:365px;width:116px;height:29.5px;display:flex;align-items:center;justify-content:center;font-size:10px;font-weight:bold;color:#000;white-space:nowrap;"><span style="display:inline-block;transform:scaleX(1.192);transform-origin:center;-webkit-text-stroke:0.4px currentColor;">Aa66778899 / 778899</span></div><div style="left:277px;top:308px;width:352px;height:17px;background:#660000;"></div><div style="left:277px;top:308px;width:352px;height:17px;display:flex;align-items:center;justify-content:center;font-size:10px;font-weight:bold;color:#fff;white-space:nowrap;"><span style="display:inline-block;transform:scaleX(1.132);transform-origin:center;-webkit-text-stroke:0.4px currentColor;">NAMA REKENING/NOMOR REKENING</span></div><div style="left:277px;top:327px;width:352px;height:18px;background:#999999;"></div><div style="left:277px;top:325px;width:352px;height:18px;display:flex;align-items:center;justify-content:center;font-size:13px;font-weight:bold;color:#000;white-space:nowrap;"><span style="display:inline-block;transform:scaleX(1.072);transform-origin:center;">NOVI OCTAVIANI</span></div><svg style="left:621px;top:327px" width="8" height="8" viewBox="0 0 8 8"><path d="M0 0h8v8z" fill="#000"/></svg><div style="left:275px;top:345px;width:354px;height:18px;background:#b7b7b7;"></div><div style="left:275px;top:344px;width:354px;height:18px;display:flex;align-items:center;justify-content:center;font-size:13px;font-weight:bold;color:#000;white-space:nowrap;"><span style="display:inline-block;transform:scaleX(1.148);transform-origin:center;">5195206209</span></div><div style="left:277px;top:365px;width:352px;height:29.5px;background:#434343;"></div><div style="left:277px;top:365px;width:352px;height:29.5px;display:flex;align-items:center;justify-content:center;font-size:10.5px;font-weight:bold;color:#ffff00;white-space:nowrap;"><span style="display:inline-block;transform:scaleX(1.148);transform-origin:center;-webkit-text-stroke:0.4px currentColor;">No HP : 087836637739</span></div><div style="left:631px;top:308px;width:333px;height:86.5px;background:#ff0000;"></div><div style="left:631px;top:309px;width:333px;height:86.5px;display:flex;align-items:center;justify-content:center;font-size:24px;font-weight:bold;color:#fff;white-space:nowrap;"><span style="display:inline-block;transform:scaleX(1.151);transform-origin:center;-webkit-text-stroke:0.4px currentColor;">MAX TAMPUNG 50 JUTA</span></div><div style="left:966px;top:308px;width:125px;height:17px;background:#274e13;"></div><div style="left:966px;top:308px;width:125px;height:17px;display:flex;align-items:center;justify-content:center;font-size:10px;font-weight:bold;color:#fff;white-space:nowrap;"><span style="display:inline-block;transform:scaleX(1.138);transform-origin:center;-webkit-text-stroke:0.4px currentColor;">TOTAL APP HARIAN</span></div><div style="left:966px;top:327px;width:125px;height:17px;background:#b6d7a8;"></div><div style="left:966px;top:327px;width:125px;height:17px;display:flex;align-items:center;justify-content:center;font-size:10px;font-weight:bold;color:#000;white-space:nowrap;"><span style="display:inline-block;">0</span></div><div style="left:966px;top:346px;width:125px;height:17px;background:#434343;"></div><div style="left:966px;top:346px;width:125px;height:17px;display:flex;align-items:center;justify-content:center;font-size:11px;font-weight:bold;color:#fff;white-space:nowrap;"><span style="display:inline-block;transform:scaleX(1.121);transform-origin:center;-webkit-text-stroke:0.4px currentColor;">TOTAL BUANG</span></div><div style="left:966px;top:363px;width:125px;height:31.5px;background:#000;"></div><div style="left:966px;top:363px;width:125px;height:31.5px;display:flex;align-items:center;justify-content:center;font-size:10.5px;font-weight:bold;color:#fff;white-space:nowrap;"><span style="display:inline-block;transform:scaleX(1.295);transform-origin:center;-webkit-text-stroke:0.4px currentColor;">50,621,976</span></div><div style="left:1093px;top:308px;width:156px;height:17px;background:#7f6000;"></div><div style="left:1093px;top:307px;width:156px;height:17px;display:flex;align-items:center;justify-content:center;font-size:11px;font-weight:bold;color:#fff;white-space:nowrap;"><span style="display:inline-block;transform:scaleX(1.131);transform-origin:center;-webkit-text-stroke:0.4px currentColor;">SALDO AKHIR</span></div><div style="left:1111px;top:310px;width:12px;height:13px;background:#0b6fd6;border:1px solid #06376b;box-sizing:border-box"></div><svg style="left:1114px;top:312px" width="6" height="9" viewBox="0 0 6 9"><path d="M2.5 0h1v6.5l1.5-1.5.6.6L3 8.2.4 5.6 1 5l1.5 1.5z" fill="#fff"/></svg><div style="left:1219px;top:310px;width:12px;height:13px;background:#0b6fd6;border:1px solid #06376b;box-sizing:border-box"></div><svg style="left:1222px;top:312px" width="6" height="9" viewBox="0 0 6 9"><path d="M2.5 0h1v6.5l1.5-1.5.6.6L3 8.2.4 5.6 1 5l1.5 1.5z" fill="#fff"/></svg><div style="left:1093px;top:327px;width:156px;height:17px;background:#fff2cc;"></div><div style="left:1093px;top:327px;width:156px;height:17px;display:flex;align-items:center;justify-content:center;font-size:11px;font-weight:bold;color:#000;white-space:nowrap;"><span style="display:inline-block;">0</span></div><div style="left:1093px;top:346px;width:156px;height:17px;background:#434343;"></div><div style="left:1093px;top:346px;width:156px;height:17px;display:flex;align-items:center;justify-content:center;font-size:11px;font-weight:bold;color:#fff;white-space:nowrap;"><span style="display:inline-block;transform:scaleX(1.132);transform-origin:center;-webkit-text-stroke:0.4px currentColor;">BACK UP SALDO AKHIR</span></div><div style="left:1093px;top:363px;width:156px;height:31.5px;background:#000;"></div><div style="left:1093px;top:363px;width:156px;height:31.5px;display:flex;align-items:center;justify-content:center;font-size:11px;font-weight:bold;color:#fff;white-space:nowrap;"><span style="display:inline-block;">0</span></div><div style="left:1251px;top:308px;width:122px;height:17px;background:#ff0000;"></div><div style="left:1251px;top:308px;width:122px;height:17px;display:flex;align-items:center;justify-content:center;font-size:10px;font-weight:bold;color:#fff;white-space:nowrap;"><span style="display:inline-block;transform:scaleX(1.178);transform-origin:center;-webkit-text-stroke:0.4px currentColor;">LINKAJA</span></div><div style="left:1375px;top:308px;width:88px;height:17px;background:#ff0000;"></div><div style="left:1375px;top:308px;width:88px;height:17px;display:flex;align-items:center;justify-content:center;font-size:10px;font-weight:bold;color:#fff;white-space:nowrap;"><span style="display:inline-block;transform:scaleX(1.282);transform-origin:center;-webkit-text-stroke:0.4px currentColor;">09110</span></div><div style="left:1251px;top:327px;width:122px;height:17px;background:#9900ff;"></div><div style="left:1251px;top:327px;width:122px;height:17px;display:flex;align-items:center;justify-content:center;font-size:10px;font-weight:bold;color:#fff;white-space:nowrap;"><span style="display:inline-block;transform:scaleX(1.126);transform-origin:center;-webkit-text-stroke:0.4px currentColor;">OVO</span></div><div style="left:1375px;top:327px;width:88px;height:17px;background:#9900ff;"></div><div style="left:1375px;top:327px;width:88px;height:17px;display:flex;align-items:center;justify-content:center;font-size:10px;font-weight:bold;color:#fff;white-space:nowrap;"><span style="display:inline-block;transform:scaleX(1.259);transform-origin:center;-webkit-text-stroke:0.4px currentColor;">39358</span></div><div style="left:1251px;top:346px;width:122px;height:17px;background:#00ff00;"></div><div style="left:1251px;top:346px;width:122px;height:17px;display:flex;align-items:center;justify-content:center;font-size:10px;font-weight:bold;color:#000;white-space:nowrap;"><span style="display:inline-block;transform:scaleX(1.130);transform-origin:center;-webkit-text-stroke:0.4px currentColor;">GOPAY</span></div><div style="left:1375px;top:346px;width:88px;height:17px;background:#00ff00;"></div><div style="left:1375px;top:346px;width:88px;height:17px;display:flex;align-items:center;justify-content:center;font-size:10px;font-weight:bold;color:#000;white-space:nowrap;"><span style="display:inline-block;transform:scaleX(1.259);transform-origin:center;-webkit-text-stroke:0.4px currentColor;">70001</span></div><div style="left:1251px;top:365px;width:122px;height:29.5px;background:#0000ff;"></div><div style="left:1251px;top:366px;width:122px;height:29.5px;display:flex;align-items:center;justify-content:center;font-size:10px;font-weight:bold;color:#fff;white-space:nowrap;"><span style="display:inline-block;transform:scaleX(1.142);transform-origin:center;-webkit-text-stroke:0.4px currentColor;">DANA</span></div><div style="left:1375px;top:365px;width:88px;height:29.5px;background:#0000ff;"></div><div style="left:1375px;top:366px;width:88px;height:29.5px;display:flex;align-items:center;justify-content:center;font-size:10px;font-weight:bold;color:#fff;white-space:nowrap;"><span style="display:inline-block;transform:scaleX(1.261);transform-origin:center;-webkit-text-stroke:0.4px currentColor;">3901</span></div><div style="left:54px;top:396.5px;width:1409px;height:14.5px;background:#000;"></div><div style="left:54px;top:413px;width:103px;height:36px;background:#0c343d;"></div><div style="left:54px;top:413px;width:103px;height:36px;display:flex;align-items:center;justify-content:center;font-size:11px;font-weight:bold;color:#fff;white-space:nowrap;"><span style="display:inline-block;">TANGGAL</span></div><div style="left:159px;top:413px;width:116px;height:36px;background:#0c343d;"></div><div style="left:159px;top:413px;width:116px;height:36px;display:flex;align-items:center;justify-content:center;font-size:11px;font-weight:bold;color:#fff;white-space:nowrap;"><span style="display:inline-block;">NOREK / JAM</span></div><div style="left:277px;top:413px;width:117px;height:36px;background:#0c343d;"></div><div style="left:277px;top:413px;width:117px;height:36px;display:flex;align-items:center;justify-content:center;font-size:11px;font-weight:bold;color:#fff;white-space:nowrap;"><span style="display:inline-block;">USER ID</span></div><div style="left:396px;top:413px;width:233px;height:36px;background:#0c343d;"></div><div style="left:396px;top:413px;width:233px;height:36px;display:flex;align-items:center;justify-content:center;font-size:11px;font-weight:bold;color:#fff;white-space:nowrap;"><span style="display:inline-block;">NAMA REKENING MEMBER</span></div><div style="left:631px;top:413px;width:129px;height:36px;background:#0c343d;"></div><div style="left:631px;top:413px;width:129px;height:36px;display:flex;align-items:center;justify-content:center;font-size:11px;font-weight:bold;color:#fff;white-space:nowrap;"><span style="display:inline-block;">NOMINAL WD</span></div><div style="left:762px;top:413px;width:82px;height:17px;background:#000000;"></div><div style="left:762px;top:413px;width:82px;height:17px;display:flex;align-items:center;justify-content:center;font-size:11px;font-weight:bold;color:#ffff00;white-space:nowrap;"><span style="display:inline-block;">BIAYA LAIN</span></div><div style="left:762px;top:432px;width:82px;height:17px;background:#cccccc;"></div><div style="left:762px;top:432px;width:82px;height:17px;display:flex;align-items:center;justify-content:center;font-size:11px;font-weight:bold;color:#000;white-space:nowrap;"><span style="display:inline-block;">52,135,164</span></div><div style="left:846px;top:413px;width:9px;height:36px;background:#000;"></div><div style="left:857px;top:413px;width:96px;height:17px;background:#660000;"></div><div style="left:857px;top:413px;width:96px;height:17px;display:flex;align-items:center;justify-content:center;font-size:11px;font-weight:bold;color:#fff;white-space:nowrap;"><span style="display:inline-block;">REK INVALID</span></div><div style="left:857px;top:432px;width:96px;height:17px;background:#cccccc;"></div><div style="left:857px;top:432px;width:96px;height:17px;display:flex;align-items:center;justify-content:center;font-size:11px;font-weight:bold;color:#000;white-space:nowrap;"><span style="display:inline-block;">0</span></div><div style="left:955px;top:413px;width:9px;height:36px;background:#000;"></div><div style="left:966px;top:413px;width:125px;height:36px;background:#0c343d;"></div><div style="left:966px;top:413px;width:125px;height:36px;display:flex;align-items:center;justify-content:center;font-size:11px;font-weight:bold;color:#fff;white-space:nowrap;"><span style="display:inline-block;transform:scaleX(1.013);transform-origin:center;">TOTAL WD HARIAN</span></div><div style="left:1093px;top:413px;width:156px;height:36px;background:#0c343d;"></div><div style="left:1093px;top:413px;width:156px;height:36px;display:flex;align-items:center;justify-content:center;font-size:12px;font-weight:bold;color:#fff;white-space:nowrap;"><span style="display:inline-block;transform:scaleX(1.022);transform-origin:center;">DANA IN/OUT</span></div><div style="left:1251px;top:413px;width:122px;height:17px;background:#000000;"></div><div style="left:1251px;top:413px;width:122px;height:17px;display:flex;align-items:center;justify-content:center;font-size:10px;font-weight:bold;color:#fff;white-space:nowrap;"><span style="display:inline-block;">SALDO AWAL</span></div><div style="left:1262px;top:415px;width:11px;height:12px;background:#0b6fd6;box-sizing:border-box"></div><svg style="left:1265px;top:416px" width="6" height="9" viewBox="0 0 6 9"><path d="M2.5 0h1v6.5l1.5-1.5.6.6L3 8.2.4 5.6 1 5l1.5 1.5z" fill="#fff"/></svg><div style="left:1351px;top:415px;width:11px;height:12px;background:#0b6fd6;box-sizing:border-box"></div><svg style="left:1354px;top:416px" width="6" height="9" viewBox="0 0 6 9"><path d="M2.5 0h1v6.5l1.5-1.5.6.6L3 8.2.4 5.6 1 5l1.5 1.5z" fill="#fff"/></svg><div style="left:1251px;top:432px;width:122px;height:17px;background:#b7b7b7;"></div><div style="left:1251px;top:432px;width:122px;height:17px;display:flex;align-items:center;justify-content:center;font-size:11px;font-weight:bold;color:#000;white-space:nowrap;"><span style="display:inline-block;">1,513,188</span></div><div style="left:1375px;top:413px;width:88px;height:36px;background:#434343;"></div><div style="left:0px;top:449px;width:1483px;height:4px;background:#c4c7c5;"></div><div style="left:0;top:453px;width:1909px;height:450px;overflow:hidden"><div style="left:0;top:-453px;width:1909px;height:992px"><div style="left:0px;top:460px;width:34.5px;height:1px;background:#d6d8da;"></div><div style="left:0px;top:443.5px;width:34.5px;height:17px;display:flex;align-items:center;justify-content:center;font-size:9px;font-weight:normal;color:#5f6368;white-space:nowrap;"><span style="display:inline-block;transform:scaleX(0.818);transform-origin:center;">179</span></div><div style="left:0px;top:477px;width:34.5px;height:1px;background:#d6d8da;"></div><div style="left:0px;top:460.5px;width:34.5px;height:17px;display:flex;align-items:center;justify-content:center;font-size:9px;font-weight:normal;color:#5f6368;white-space:nowrap;"><span style="display:inline-block;transform:scaleX(0.818);transform-origin:center;">180</span></div><div style="left:0px;top:494px;width:34.5px;height:1px;background:#d6d8da;"></div><div style="left:0px;top:477.5px;width:34.5px;height:17px;display:flex;align-items:center;justify-content:center;font-size:9px;font-weight:normal;color:#5f6368;white-space:nowrap;"><span style="display:inline-block;transform:scaleX(0.818);transform-origin:center;">181</span></div><div style="left:0px;top:511px;width:34.5px;height:1px;background:#d6d8da;"></div><div style="left:0px;top:494.5px;width:34.5px;height:17px;display:flex;align-items:center;justify-content:center;font-size:9px;font-weight:normal;color:#5f6368;white-space:nowrap;"><span style="display:inline-block;transform:scaleX(0.818);transform-origin:center;">182</span></div><div style="left:0px;top:528px;width:34.5px;height:1px;background:#d6d8da;"></div><div style="left:0px;top:511.5px;width:34.5px;height:17px;display:flex;align-items:center;justify-content:center;font-size:9px;font-weight:normal;color:#5f6368;white-space:nowrap;"><span style="display:inline-block;transform:scaleX(0.818);transform-origin:center;">183</span></div><div style="left:0px;top:545px;width:34.5px;height:1px;background:#d6d8da;"></div><div style="left:0px;top:528.5px;width:34.5px;height:17px;display:flex;align-items:center;justify-content:center;font-size:9px;font-weight:normal;color:#5f6368;white-space:nowrap;"><span style="display:inline-block;transform:scaleX(0.818);transform-origin:center;">184</span></div><div style="left:0px;top:562.5px;width:34.5px;height:1.0px;background:#d6d8da;"></div><div style="left:0px;top:545.5px;width:34.5px;height:17.5px;display:flex;align-items:center;justify-content:center;font-size:9px;font-weight:normal;color:#5f6368;white-space:nowrap;"><span style="display:inline-block;transform:scaleX(0.818);transform-origin:center;">185</span></div><div style="left:0px;top:580px;width:34.5px;height:1px;background:#d6d8da;"></div><div style="left:0px;top:563.0px;width:34.5px;height:17.5px;display:flex;align-items:center;justify-content:center;font-size:9px;font-weight:normal;color:#5f6368;white-space:nowrap;"><span style="display:inline-block;transform:scaleX(0.818);transform-origin:center;">186</span></div><div style="left:0px;top:597.5px;width:34.5px;height:1.0px;background:#d6d8da;"></div><div style="left:0px;top:580.5px;width:34.5px;height:17.5px;display:flex;align-items:center;justify-content:center;font-size:9px;font-weight:normal;color:#5f6368;white-space:nowrap;"><span style="display:inline-block;transform:scaleX(0.818);transform-origin:center;">187</span></div><div style="left:0px;top:615px;width:34.5px;height:1px;background:#d6d8da;"></div><div style="left:0px;top:598.0px;width:34.5px;height:17.5px;display:flex;align-items:center;justify-content:center;font-size:9px;font-weight:normal;color:#5f6368;white-space:nowrap;"><span style="display:inline-block;transform:scaleX(0.818);transform-origin:center;">188</span></div><div style="left:0px;top:632px;width:34.5px;height:1px;background:#d6d8da;"></div><div style="left:0px;top:615.5px;width:34.5px;height:17px;display:flex;align-items:center;justify-content:center;font-size:9px;font-weight:normal;color:#5f6368;white-space:nowrap;"><span style="display:inline-block;transform:scaleX(0.818);transform-origin:center;">189</span></div><div style="left:0px;top:649px;width:34.5px;height:1px;background:#d6d8da;"></div><div style="left:0px;top:632.5px;width:34.5px;height:17px;display:flex;align-items:center;justify-content:center;font-size:9px;font-weight:normal;color:#5f6368;white-space:nowrap;"><span style="display:inline-block;transform:scaleX(0.818);transform-origin:center;">190</span></div><div style="left:0px;top:666px;width:34.5px;height:1px;background:#d6d8da;"></div><div style="left:0px;top:649.5px;width:34.5px;height:17px;display:flex;align-items:center;justify-content:center;font-size:9px;font-weight:normal;color:#5f6368;white-space:nowrap;"><span style="display:inline-block;transform:scaleX(0.818);transform-origin:center;">191</span></div><div style="left:0px;top:666px;width:34px;height:17px;background:#d3e3fd;"></div><div style="left:0px;top:683px;width:34.5px;height:1px;background:#d6d8da;"></div><div style="left:0px;top:666.5px;width:34.5px;height:17px;display:flex;align-items:center;justify-content:center;font-size:9px;font-weight:bold;color:#0b1f4a;white-space:nowrap;"><span style="display:inline-block;transform:scaleX(0.818);transform-origin:center;">192</span></div><div style="left:0px;top:700px;width:34.5px;height:1px;background:#d6d8da;"></div><div style="left:0px;top:683.5px;width:34.5px;height:17px;display:flex;align-items:center;justify-content:center;font-size:9px;font-weight:normal;color:#5f6368;white-space:nowrap;"><span style="display:inline-block;transform:scaleX(0.818);transform-origin:center;">193</span></div><div style="left:0px;top:717px;width:34.5px;height:1px;background:#d6d8da;"></div><div style="left:0px;top:700.5px;width:34.5px;height:17px;display:flex;align-items:center;justify-content:center;font-size:9px;font-weight:normal;color:#5f6368;white-space:nowrap;"><span style="display:inline-block;transform:scaleX(0.818);transform-origin:center;">194</span></div><div style="left:0px;top:734px;width:34.5px;height:1px;background:#d6d8da;"></div><div style="left:0px;top:717.5px;width:34.5px;height:17px;display:flex;align-items:center;justify-content:center;font-size:9px;font-weight:normal;color:#5f6368;white-space:nowrap;"><span style="display:inline-block;transform:scaleX(0.818);transform-origin:center;">195</span></div><div style="left:0px;top:751px;width:34.5px;height:1px;background:#d6d8da;"></div><div style="left:0px;top:734.5px;width:34.5px;height:17px;display:flex;align-items:center;justify-content:center;font-size:9px;font-weight:normal;color:#5f6368;white-space:nowrap;"><span style="display:inline-block;transform:scaleX(0.818);transform-origin:center;">196</span></div><div style="left:0px;top:768px;width:34.5px;height:1px;background:#d6d8da;"></div><div style="left:0px;top:751.5px;width:34.5px;height:17px;display:flex;align-items:center;justify-content:center;font-size:9px;font-weight:normal;color:#5f6368;white-space:nowrap;"><span style="display:inline-block;transform:scaleX(0.818);transform-origin:center;">197</span></div><div style="left:0px;top:785px;width:34.5px;height:1px;background:#d6d8da;"></div><div style="left:0px;top:768.5px;width:34.5px;height:17px;display:flex;align-items:center;justify-content:center;font-size:9px;font-weight:normal;color:#5f6368;white-space:nowrap;"><span style="display:inline-block;transform:scaleX(0.818);transform-origin:center;">198</span></div><div style="left:0px;top:802px;width:34.5px;height:1px;background:#d6d8da;"></div><div style="left:0px;top:785.5px;width:34.5px;height:17px;display:flex;align-items:center;justify-content:center;font-size:9px;font-weight:normal;color:#5f6368;white-space:nowrap;"><span style="display:inline-block;transform:scaleX(0.818);transform-origin:center;">199</span></div><div style="left:0px;top:819px;width:34.5px;height:1px;background:#d6d8da;"></div><div style="left:0px;top:802.5px;width:34.5px;height:17px;display:flex;align-items:center;justify-content:center;font-size:9px;font-weight:normal;color:#5f6368;white-space:nowrap;"><span style="display:inline-block;transform:scaleX(0.818);transform-origin:center;">200</span></div><div style="left:0px;top:836px;width:34.5px;height:1px;background:#d6d8da;"></div><div style="left:0px;top:819.5px;width:34.5px;height:17px;display:flex;align-items:center;justify-content:center;font-size:9px;font-weight:normal;color:#5f6368;white-space:nowrap;"><span style="display:inline-block;transform:scaleX(0.818);transform-origin:center;">201</span></div><div style="left:0px;top:853px;width:34.5px;height:1px;background:#d6d8da;"></div><div style="left:0px;top:836.5px;width:34.5px;height:17px;display:flex;align-items:center;justify-content:center;font-size:9px;font-weight:normal;color:#5f6368;white-space:nowrap;"><span style="display:inline-block;transform:scaleX(0.818);transform-origin:center;">202</span></div><div style="left:0px;top:870px;width:34.5px;height:1px;background:#d6d8da;"></div><div style="left:0px;top:853.5px;width:34.5px;height:17px;display:flex;align-items:center;justify-content:center;font-size:9px;font-weight:normal;color:#5f6368;white-space:nowrap;"><span style="display:inline-block;transform:scaleX(0.818);transform-origin:center;">203</span></div><div style="left:0px;top:887px;width:34.5px;height:1px;background:#d6d8da;"></div><div style="left:0px;top:870.5px;width:34.5px;height:17px;display:flex;align-items:center;justify-content:center;font-size:9px;font-weight:normal;color:#5f6368;white-space:nowrap;"><span style="display:inline-block;transform:scaleX(0.818);transform-origin:center;">204</span></div><div style="left:0px;top:904px;width:34.5px;height:1px;background:#d6d8da;"></div><div style="left:0px;top:887.5px;width:34.5px;height:17px;display:flex;align-items:center;justify-content:center;font-size:9px;font-weight:normal;color:#5f6368;white-space:nowrap;"><span style="display:inline-block;transform:scaleX(0.818);transform-origin:center;">205</span></div><div style="left:36px;top:443px;width:16px;height:460px;background:#000;"></div><div style="left:52px;top:443px;width:577px;height:460px;background:#ffffff;"></div><div style="left:629px;top:443px;width:132px;height:460px;background:#ffffff;"></div><div style="left:761px;top:443px;width:84px;height:460px;background:#f4cccc;"></div><div style="left:845px;top:443px;width:12px;height:460px;background:#000;"></div><div style="left:855px;top:443px;width:2px;height:460px;background:#ffffff;"></div><div style="left:857px;top:443px;width:96px;height:460px;background:#666666;"></div><div style="left:953px;top:443px;width:2px;height:460px;background:#ffffff;"></div><div style="left:955px;top:443px;width:9px;height:460px;background:#000;"></div><div style="left:964px;top:443px;width:2px;height:460px;background:#ffffff;"></div><div style="left:966px;top:443px;width:125px;height:460px;background:#000;"></div><div style="left:1091px;top:443px;width:2px;height:460px;background:#ffffff;"></div><div style="left:1093px;top:443px;width:156px;height:460px;background:#fce5cd;"></div><div style="left:1249px;top:443px;width:2px;height:460px;background:#ffffff;"></div><div style="left:1251px;top:443px;width:122px;height:460px;background:#cccccc;"></div><div style="left:1373px;top:443px;width:2px;height:460px;background:#ffffff;"></div><div style="left:1375px;top:443px;width:88px;height:460px;background:#000;"></div><div style="left:1463px;top:443px;width:2px;height:17px;background:#ffffff;"></div><div style="left:1463px;top:460px;width:2px;height:17px;background:#000000;"></div><div style="left:1463px;top:477px;width:2px;height:426px;background:#ffffff;"></div><div style="left:1465px;top:443px;width:18px;height:460px;background:#000;"></div><div style="left:844px;top:443px;width:2px;height:460px;background:#ffffff;"></div><div style="left:394px;top:443px;width:366px;height:17px;background:#00ffff;"></div><div style="left:394px;top:460px;width:366px;height:17px;background:#00ffff;"></div><div style="left:394px;top:477px;width:366px;height:17px;background:#00ffff;"></div><div style="left:394px;top:597.5px;width:366px;height:17.5px;background:#00ffff;"></div><div style="left:394px;top:615px;width:366px;height:17px;background:#00ffff;"></div><div style="left:394px;top:494px;width:366px;height:17px;background:#ff9900;"></div><div style="left:394px;top:511px;width:366px;height:17px;background:#ff9900;"></div><div style="left:394px;top:528px;width:366px;height:17px;background:#ff9900;"></div><div style="left:394px;top:632px;width:366px;height:17px;background:#ff9900;"></div><div style="left:52px;top:460px;width:342px;height:1px;background:#e2e3e3;"></div><div style="left:394px;top:460px;width:366px;height:1px;background:#1ee0e0;"></div><div style="left:761px;top:460px;width:83px;height:1px;background:#dcb8b8;"></div><div style="left:1093px;top:460px;width:156px;height:1px;background:#e6cdb3;"></div><div style="left:52px;top:477px;width:342px;height:1px;background:#e2e3e3;"></div><div style="left:394px;top:477px;width:366px;height:1px;background:#1ee0e0;"></div><div style="left:761px;top:477px;width:83px;height:1px;background:#dcb8b8;"></div><div style="left:1093px;top:477px;width:156px;height:1px;background:#e6cdb3;"></div><div style="left:52px;top:494px;width:342px;height:1px;background:#e2e3e3;"></div><div style="left:394px;top:494px;width:366px;height:1px;background:#1ee0e0;"></div><div style="left:761px;top:494px;width:83px;height:1px;background:#dcb8b8;"></div><div style="left:1093px;top:494px;width:156px;height:1px;background:#e6cdb3;"></div><div style="left:52px;top:511px;width:342px;height:1px;background:#e2e3e3;"></div><div style="left:394px;top:511px;width:366px;height:1px;background:#e68c10;"></div><div style="left:761px;top:511px;width:83px;height:1px;background:#dcb8b8;"></div><div style="left:1093px;top:511px;width:156px;height:1px;background:#e6cdb3;"></div><div style="left:52px;top:528px;width:342px;height:1px;background:#e2e3e3;"></div><div style="left:394px;top:528px;width:366px;height:1px;background:#e68c10;"></div><div style="left:761px;top:528px;width:83px;height:1px;background:#dcb8b8;"></div><div style="left:1093px;top:528px;width:156px;height:1px;background:#e6cdb3;"></div><div style="left:52px;top:545px;width:342px;height:1px;background:#e2e3e3;"></div><div style="left:394px;top:545px;width:366px;height:1px;background:#e68c10;"></div><div style="left:761px;top:545px;width:83px;height:1px;background:#dcb8b8;"></div><div style="left:1093px;top:545px;width:156px;height:1px;background:#e6cdb3;"></div><div style="left:52px;top:597.5px;width:342px;height:1.0px;background:#e2e3e3;"></div><div style="left:394px;top:597.5px;width:366px;height:1.0px;background:#e2e3e3;"></div><div style="left:761px;top:597.5px;width:83px;height:1.0px;background:#dcb8b8;"></div><div style="left:1093px;top:597.5px;width:156px;height:1.0px;background:#e6cdb3;"></div><div style="left:52px;top:615px;width:342px;height:1px;background:#e2e3e3;"></div><div style="left:394px;top:615px;width:366px;height:1px;background:#1ee0e0;"></div><div style="left:761px;top:615px;width:83px;height:1px;background:#dcb8b8;"></div><div style="left:1093px;top:615px;width:156px;height:1px;background:#e6cdb3;"></div><div style="left:52px;top:632px;width:342px;height:1px;background:#e2e3e3;"></div><div style="left:394px;top:632px;width:366px;height:1px;background:#1ee0e0;"></div><div style="left:761px;top:632px;width:83px;height:1px;background:#dcb8b8;"></div><div style="left:1093px;top:632px;width:156px;height:1px;background:#e6cdb3;"></div><div style="left:52px;top:649px;width:342px;height:1px;background:#e2e3e3;"></div><div style="left:394px;top:649px;width:366px;height:1px;background:#e68c10;"></div><div style="left:761px;top:649px;width:83px;height:1px;background:#dcb8b8;"></div><div style="left:1093px;top:649px;width:156px;height:1px;background:#e6cdb3;"></div><div style="left:52px;top:666px;width:342px;height:1px;background:#e2e3e3;"></div><div style="left:394px;top:666px;width:366px;height:1px;background:#e2e3e3;"></div><div style="left:761px;top:666px;width:83px;height:1px;background:#dcb8b8;"></div><div style="left:1093px;top:666px;width:156px;height:1px;background:#e6cdb3;"></div><div style="left:52px;top:683px;width:342px;height:1px;background:#e2e3e3;"></div><div style="left:394px;top:683px;width:366px;height:1px;background:#e2e3e3;"></div><div style="left:761px;top:683px;width:83px;height:1px;background:#dcb8b8;"></div><div style="left:1093px;top:683px;width:156px;height:1px;background:#e6cdb3;"></div><div style="left:52px;top:700px;width:342px;height:1px;background:#e2e3e3;"></div><div style="left:394px;top:700px;width:366px;height:1px;background:#e2e3e3;"></div><div style="left:761px;top:700px;width:83px;height:1px;background:#dcb8b8;"></div><div style="left:1093px;top:700px;width:156px;height:1px;background:#e6cdb3;"></div><div style="left:52px;top:717px;width:342px;height:1px;background:#e2e3e3;"></div><div style="left:394px;top:717px;width:366px;height:1px;background:#e2e3e3;"></div><div style="left:761px;top:717px;width:83px;height:1px;background:#dcb8b8;"></div><div style="left:1093px;top:717px;width:156px;height:1px;background:#e6cdb3;"></div><div style="left:52px;top:734px;width:342px;height:1px;background:#e2e3e3;"></div><div style="left:394px;top:734px;width:366px;height:1px;background:#e2e3e3;"></div><div style="left:761px;top:734px;width:83px;height:1px;background:#dcb8b8;"></div><div style="left:1093px;top:734px;width:156px;height:1px;background:#e6cdb3;"></div><div style="left:52px;top:751px;width:342px;height:1px;background:#e2e3e3;"></div><div style="left:394px;top:751px;width:366px;height:1px;background:#e2e3e3;"></div><div style="left:761px;top:751px;width:83px;height:1px;background:#dcb8b8;"></div><div style="left:1093px;top:751px;width:156px;height:1px;background:#e6cdb3;"></div><div style="left:52px;top:768px;width:342px;height:1px;background:#e2e3e3;"></div><div style="left:394px;top:768px;width:366px;height:1px;background:#e2e3e3;"></div><div style="left:761px;top:768px;width:83px;height:1px;background:#dcb8b8;"></div><div style="left:1093px;top:768px;width:156px;height:1px;background:#e6cdb3;"></div><div style="left:52px;top:785px;width:342px;height:1px;background:#e2e3e3;"></div><div style="left:394px;top:785px;width:366px;height:1px;background:#e2e3e3;"></div><div style="left:761px;top:785px;width:83px;height:1px;background:#dcb8b8;"></div><div style="left:1093px;top:785px;width:156px;height:1px;background:#e6cdb3;"></div><div style="left:52px;top:802px;width:342px;height:1px;background:#e2e3e3;"></div><div style="left:394px;top:802px;width:366px;height:1px;background:#e2e3e3;"></div><div style="left:761px;top:802px;width:83px;height:1px;background:#dcb8b8;"></div><div style="left:1093px;top:802px;width:156px;height:1px;background:#e6cdb3;"></div><div style="left:52px;top:819px;width:342px;height:1px;background:#e2e3e3;"></div><div style="left:394px;top:819px;width:366px;height:1px;background:#e2e3e3;"></div><div style="left:761px;top:819px;width:83px;height:1px;background:#dcb8b8;"></div><div style="left:1093px;top:819px;width:156px;height:1px;background:#e6cdb3;"></div><div style="left:52px;top:836px;width:342px;height:1px;background:#e2e3e3;"></div><div style="left:394px;top:836px;width:366px;height:1px;background:#e2e3e3;"></div><div style="left:761px;top:836px;width:83px;height:1px;background:#dcb8b8;"></div><div style="left:1093px;top:836px;width:156px;height:1px;background:#e6cdb3;"></div><div style="left:52px;top:853px;width:342px;height:1px;background:#e2e3e3;"></div><div style="left:394px;top:853px;width:366px;height:1px;background:#e2e3e3;"></div><div style="left:761px;top:853px;width:83px;height:1px;background:#dcb8b8;"></div><div style="left:1093px;top:853px;width:156px;height:1px;background:#e6cdb3;"></div><div style="left:52px;top:870px;width:342px;height:1px;background:#e2e3e3;"></div><div style="left:394px;top:870px;width:366px;height:1px;background:#e2e3e3;"></div><div style="left:761px;top:870px;width:83px;height:1px;background:#dcb8b8;"></div><div style="left:1093px;top:870px;width:156px;height:1px;background:#e6cdb3;"></div><div style="left:52px;top:887px;width:342px;height:1px;background:#e2e3e3;"></div><div style="left:394px;top:887px;width:366px;height:1px;background:#e2e3e3;"></div><div style="left:761px;top:887px;width:83px;height:1px;background:#dcb8b8;"></div><div style="left:1093px;top:887px;width:156px;height:1px;background:#e6cdb3;"></div><div style="left:52px;top:904px;width:342px;height:1px;background:#e2e3e3;"></div><div style="left:394px;top:904px;width:366px;height:1px;background:#e2e3e3;"></div><div style="left:761px;top:904px;width:83px;height:1px;background:#dcb8b8;"></div><div style="left:1093px;top:904px;width:156px;height:1px;background:#e6cdb3;"></div><div style="left:857px;top:460px;width:96px;height:1px;background-image:linear-gradient(to right,#fff 0 2px,transparent 2px 4px);background-size:4px 1px;"></div><div style="left:966px;top:460px;width:125px;height:1px;background-image:linear-gradient(to right,#fff 0 2px,transparent 2px 4px);background-size:4px 1px;"></div><div style="left:1251px;top:460px;width:122px;height:1px;background-image:linear-gradient(to right,#fff 0 2px,transparent 2px 4px);background-size:4px 1px;"></div><div style="left:857px;top:477px;width:96px;height:1px;background-image:linear-gradient(to right,#fff 0 2px,transparent 2px 4px);background-size:4px 1px;"></div><div style="left:966px;top:477px;width:125px;height:1px;background-image:linear-gradient(to right,#fff 0 2px,transparent 2px 4px);background-size:4px 1px;"></div><div style="left:1251px;top:477px;width:122px;height:1px;background-image:linear-gradient(to right,#fff 0 2px,transparent 2px 4px);background-size:4px 1px;"></div><div style="left:857px;top:494px;width:96px;height:1px;background-image:linear-gradient(to right,#fff 0 2px,transparent 2px 4px);background-size:4px 1px;"></div><div style="left:966px;top:494px;width:125px;height:1px;background-image:linear-gradient(to right,#fff 0 2px,transparent 2px 4px);background-size:4px 1px;"></div><div style="left:1251px;top:494px;width:122px;height:1px;background-image:linear-gradient(to right,#fff 0 2px,transparent 2px 4px);background-size:4px 1px;"></div><div style="left:857px;top:511px;width:96px;height:1px;background-image:linear-gradient(to right,#fff 0 2px,transparent 2px 4px);background-size:4px 1px;"></div><div style="left:966px;top:511px;width:125px;height:1px;background-image:linear-gradient(to right,#fff 0 2px,transparent 2px 4px);background-size:4px 1px;"></div><div style="left:1251px;top:511px;width:122px;height:1px;background-image:linear-gradient(to right,#fff 0 2px,transparent 2px 4px);background-size:4px 1px;"></div><div style="left:857px;top:528px;width:96px;height:1px;background-image:linear-gradient(to right,#fff 0 2px,transparent 2px 4px);background-size:4px 1px;"></div><div style="left:966px;top:528px;width:125px;height:1px;background-image:linear-gradient(to right,#fff 0 2px,transparent 2px 4px);background-size:4px 1px;"></div><div style="left:1251px;top:528px;width:122px;height:1px;background-image:linear-gradient(to right,#fff 0 2px,transparent 2px 4px);background-size:4px 1px;"></div><div style="left:857px;top:545px;width:96px;height:1px;background-image:linear-gradient(to right,#fff 0 2px,transparent 2px 4px);background-size:4px 1px;"></div><div style="left:966px;top:545px;width:125px;height:1px;background-image:linear-gradient(to right,#fff 0 2px,transparent 2px 4px);background-size:4px 1px;"></div><div style="left:1251px;top:545px;width:122px;height:1px;background-image:linear-gradient(to right,#fff 0 2px,transparent 2px 4px);background-size:4px 1px;"></div><div style="left:857px;top:562.5px;width:96px;height:1px;background-image:linear-gradient(to right,#fff 0 2px,transparent 2px 4px);background-size:4px 1px;"></div><div style="left:966px;top:562.5px;width:125px;height:1px;background-image:linear-gradient(to right,#fff 0 2px,transparent 2px 4px);background-size:4px 1px;"></div><div style="left:1251px;top:562.5px;width:122px;height:1px;background-image:linear-gradient(to right,#fff 0 2px,transparent 2px 4px);background-size:4px 1px;"></div><div style="left:857px;top:580px;width:96px;height:1px;background-image:linear-gradient(to right,#fff 0 2px,transparent 2px 4px);background-size:4px 1px;"></div><div style="left:966px;top:580px;width:125px;height:1px;background-image:linear-gradient(to right,#fff 0 2px,transparent 2px 4px);background-size:4px 1px;"></div><div style="left:1251px;top:580px;width:122px;height:1px;background-image:linear-gradient(to right,#fff 0 2px,transparent 2px 4px);background-size:4px 1px;"></div><div style="left:857px;top:597.5px;width:96px;height:1px;background-image:linear-gradient(to right,#fff 0 2px,transparent 2px 4px);background-size:4px 1px;"></div><div style="left:966px;top:597.5px;width:125px;height:1px;background-image:linear-gradient(to right,#fff 0 2px,transparent 2px 4px);background-size:4px 1px;"></div><div style="left:1251px;top:597.5px;width:122px;height:1px;background-image:linear-gradient(to right,#fff 0 2px,transparent 2px 4px);background-size:4px 1px;"></div><div style="left:857px;top:615px;width:96px;height:1px;background-image:linear-gradient(to right,#fff 0 2px,transparent 2px 4px);background-size:4px 1px;"></div><div style="left:966px;top:615px;width:125px;height:1px;background-image:linear-gradient(to right,#fff 0 2px,transparent 2px 4px);background-size:4px 1px;"></div><div style="left:1251px;top:615px;width:122px;height:1px;background-image:linear-gradient(to right,#fff 0 2px,transparent 2px 4px);background-size:4px 1px;"></div><div style="left:857px;top:632px;width:96px;height:1px;background-image:linear-gradient(to right,#fff 0 2px,transparent 2px 4px);background-size:4px 1px;"></div><div style="left:966px;top:632px;width:125px;height:1px;background-image:linear-gradient(to right,#fff 0 2px,transparent 2px 4px);background-size:4px 1px;"></div><div style="left:1251px;top:632px;width:122px;height:1px;background-image:linear-gradient(to right,#fff 0 2px,transparent 2px 4px);background-size:4px 1px;"></div><div style="left:857px;top:649px;width:96px;height:1px;background-image:linear-gradient(to right,#fff 0 2px,transparent 2px 4px);background-size:4px 1px;"></div><div style="left:966px;top:649px;width:125px;height:1px;background-image:linear-gradient(to right,#fff 0 2px,transparent 2px 4px);background-size:4px 1px;"></div><div style="left:1251px;top:649px;width:122px;height:1px;background-image:linear-gradient(to right,#fff 0 2px,transparent 2px 4px);background-size:4px 1px;"></div><div style="left:857px;top:666px;width:96px;height:1px;background-image:linear-gradient(to right,#fff 0 2px,transparent 2px 4px);background-size:4px 1px;"></div><div style="left:966px;top:666px;width:125px;height:1px;background-image:linear-gradient(to right,#fff 0 2px,transparent 2px 4px);background-size:4px 1px;"></div><div style="left:1251px;top:666px;width:122px;height:1px;background-image:linear-gradient(to right,#fff 0 2px,transparent 2px 4px);background-size:4px 1px;"></div><div style="left:857px;top:683px;width:96px;height:1px;background-image:linear-gradient(to right,#fff 0 2px,transparent 2px 4px);background-size:4px 1px;"></div><div style="left:966px;top:683px;width:125px;height:1px;background-image:linear-gradient(to right,#fff 0 2px,transparent 2px 4px);background-size:4px 1px;"></div><div style="left:1251px;top:683px;width:122px;height:1px;background-image:linear-gradient(to right,#fff 0 2px,transparent 2px 4px);background-size:4px 1px;"></div><div style="left:857px;top:700px;width:96px;height:1px;background-image:linear-gradient(to right,#fff 0 2px,transparent 2px 4px);background-size:4px 1px;"></div><div style="left:966px;top:700px;width:125px;height:1px;background-image:linear-gradient(to right,#fff 0 2px,transparent 2px 4px);background-size:4px 1px;"></div><div style="left:1251px;top:700px;width:122px;height:1px;background-image:linear-gradient(to right,#fff 0 2px,transparent 2px 4px);background-size:4px 1px;"></div><div style="left:857px;top:717px;width:96px;height:1px;background-image:linear-gradient(to right,#fff 0 2px,transparent 2px 4px);background-size:4px 1px;"></div><div style="left:966px;top:717px;width:125px;height:1px;background-image:linear-gradient(to right,#fff 0 2px,transparent 2px 4px);background-size:4px 1px;"></div><div style="left:1251px;top:717px;width:122px;height:1px;background-image:linear-gradient(to right,#fff 0 2px,transparent 2px 4px);background-size:4px 1px;"></div><div style="left:857px;top:734px;width:96px;height:1px;background-image:linear-gradient(to right,#fff 0 2px,transparent 2px 4px);background-size:4px 1px;"></div><div style="left:966px;top:734px;width:125px;height:1px;background-image:linear-gradient(to right,#fff 0 2px,transparent 2px 4px);background-size:4px 1px;"></div><div style="left:1251px;top:734px;width:122px;height:1px;background-image:linear-gradient(to right,#fff 0 2px,transparent 2px 4px);background-size:4px 1px;"></div><div style="left:857px;top:751px;width:96px;height:1px;background-image:linear-gradient(to right,#fff 0 2px,transparent 2px 4px);background-size:4px 1px;"></div><div style="left:966px;top:751px;width:125px;height:1px;background-image:linear-gradient(to right,#fff 0 2px,transparent 2px 4px);background-size:4px 1px;"></div><div style="left:1251px;top:751px;width:122px;height:1px;background-image:linear-gradient(to right,#fff 0 2px,transparent 2px 4px);background-size:4px 1px;"></div><div style="left:857px;top:768px;width:96px;height:1px;background-image:linear-gradient(to right,#fff 0 2px,transparent 2px 4px);background-size:4px 1px;"></div><div style="left:966px;top:768px;width:125px;height:1px;background-image:linear-gradient(to right,#fff 0 2px,transparent 2px 4px);background-size:4px 1px;"></div><div style="left:1251px;top:768px;width:122px;height:1px;background-image:linear-gradient(to right,#fff 0 2px,transparent 2px 4px);background-size:4px 1px;"></div><div style="left:857px;top:785px;width:96px;height:1px;background-image:linear-gradient(to right,#fff 0 2px,transparent 2px 4px);background-size:4px 1px;"></div><div style="left:966px;top:785px;width:125px;height:1px;background-image:linear-gradient(to right,#fff 0 2px,transparent 2px 4px);background-size:4px 1px;"></div><div style="left:1251px;top:785px;width:122px;height:1px;background-image:linear-gradient(to right,#fff 0 2px,transparent 2px 4px);background-size:4px 1px;"></div><div style="left:857px;top:802px;width:96px;height:1px;background-image:linear-gradient(to right,#fff 0 2px,transparent 2px 4px);background-size:4px 1px;"></div><div style="left:966px;top:802px;width:125px;height:1px;background-image:linear-gradient(to right,#fff 0 2px,transparent 2px 4px);background-size:4px 1px;"></div><div style="left:1251px;top:802px;width:122px;height:1px;background-image:linear-gradient(to right,#fff 0 2px,transparent 2px 4px);background-size:4px 1px;"></div><div style="left:857px;top:819px;width:96px;height:1px;background-image:linear-gradient(to right,#fff 0 2px,transparent 2px 4px);background-size:4px 1px;"></div><div style="left:966px;top:819px;width:125px;height:1px;background-image:linear-gradient(to right,#fff 0 2px,transparent 2px 4px);background-size:4px 1px;"></div><div style="left:1251px;top:819px;width:122px;height:1px;background-image:linear-gradient(to right,#fff 0 2px,transparent 2px 4px);background-size:4px 1px;"></div><div style="left:857px;top:836px;width:96px;height:1px;background-image:linear-gradient(to right,#fff 0 2px,transparent 2px 4px);background-size:4px 1px;"></div><div style="left:966px;top:836px;width:125px;height:1px;background-image:linear-gradient(to right,#fff 0 2px,transparent 2px 4px);background-size:4px 1px;"></div><div style="left:1251px;top:836px;width:122px;height:1px;background-image:linear-gradient(to right,#fff 0 2px,transparent 2px 4px);background-size:4px 1px;"></div><div style="left:857px;top:853px;width:96px;height:1px;background-image:linear-gradient(to right,#fff 0 2px,transparent 2px 4px);background-size:4px 1px;"></div><div style="left:966px;top:853px;width:125px;height:1px;background-image:linear-gradient(to right,#fff 0 2px,transparent 2px 4px);background-size:4px 1px;"></div><div style="left:1251px;top:853px;width:122px;height:1px;background-image:linear-gradient(to right,#fff 0 2px,transparent 2px 4px);background-size:4px 1px;"></div><div style="left:857px;top:870px;width:96px;height:1px;background-image:linear-gradient(to right,#fff 0 2px,transparent 2px 4px);background-size:4px 1px;"></div><div style="left:966px;top:870px;width:125px;height:1px;background-image:linear-gradient(to right,#fff 0 2px,transparent 2px 4px);background-size:4px 1px;"></div><div style="left:1251px;top:870px;width:122px;height:1px;background-image:linear-gradient(to right,#fff 0 2px,transparent 2px 4px);background-size:4px 1px;"></div><div style="left:857px;top:887px;width:96px;height:1px;background-image:linear-gradient(to right,#fff 0 2px,transparent 2px 4px);background-size:4px 1px;"></div><div style="left:966px;top:887px;width:125px;height:1px;background-image:linear-gradient(to right,#fff 0 2px,transparent 2px 4px);background-size:4px 1px;"></div><div style="left:1251px;top:887px;width:122px;height:1px;background-image:linear-gradient(to right,#fff 0 2px,transparent 2px 4px);background-size:4px 1px;"></div><div style="left:156px;top:443px;width:2px;height:102px;background:#000;"></div><div style="left:156px;top:598px;width:2px;height:305px;background:#000;"></div><div style="left:274px;top:443px;width:2px;height:102px;background:#000;"></div><div style="left:274px;top:598px;width:2px;height:305px;background:#000;"></div><div style="left:393px;top:443px;width:2px;height:102px;background:#000;"></div><div style="left:393px;top:598px;width:2px;height:305px;background:#000;"></div><div style="left:628.5px;top:477px;width:1.5px;height:17px;background:#000;"></div><div style="left:628.5px;top:597.5px;width:1.5px;height:17.5px;background:#000;"></div><div style="left:628.5px;top:615px;width:1.5px;height:17px;background:#000;"></div><div style="left:628.5px;top:649px;width:1.5px;height:254px;background:#000;"></div><div style="left:759px;top:443px;width:2px;height:102px;background:#000;"></div><div style="left:759px;top:598px;width:2px;height:305px;background:#000;"></div><div style="left:629px;top:443px;width:1px;height:17px;background:#1ee0e0;"></div><div style="left:629px;top:460px;width:1px;height:17px;background:#1ee0e0;"></div><div style="left:52px;top:545px;width:794px;height:54px;background:#ffffff;"></div><div style="left:54px;top:547.5px;width:790px;height:49.5px;background:#7f6000;"></div><div style="left:54px;top:548.0px;width:790px;height:49.5px;display:flex;align-items:center;justify-content:center;font-size:27.5px;font-weight:bold;color:#fff;white-space:nowrap;"><span style="display:inline-block;">16-Jan-2026</span></div><div style="left:157px;top:443px;width:118px;height:17px;display:flex;align-items:center;justify-content:center;font-size:11px;font-weight:bold;color:#000;white-space:nowrap;"><span style="display:inline-block;">16:44:42</span></div><div style="left:394px;top:445px;width:235px;height:17px;display:flex;align-items:center;justify-content:flex-start;font-size:9.5px;font-weight:bold;color:#000;white-space:nowrap;padding-left:3px;box-sizing:border-box"><span style="display:inline-block;transform:scaleX(1.023);transform-origin:left;-webkit-text-stroke:0.4px currentColor;">DANA MASUK DARI BCA GII / YUNITA</span></div><div style="left:965.5px;top:443px;width:127.0px;height:17px;display:flex;align-items:center;justify-content:center;font-size:11px;font-weight:bold;color:#fff;white-space:nowrap;"><span style="display:inline-block;">0</span></div><div style="left:965.5px;top:460px;width:127.0px;height:17px;display:flex;align-items:center;justify-content:center;font-size:11px;font-weight:bold;color:#fff;white-space:nowrap;"><span style="display:inline-block;">0</span></div><div style="left:965.5px;top:477px;width:127.0px;height:17px;display:flex;align-items:center;justify-content:center;font-size:11px;font-weight:bold;color:#fff;white-space:nowrap;"><span style="display:inline-block;">0</span></div><div style="left:965.5px;top:494px;width:127.0px;height:17px;display:flex;align-items:center;justify-content:center;font-size:11px;font-weight:bold;color:#fff;white-space:nowrap;"><span style="display:inline-block;">0</span></div><div style="left:965.5px;top:511px;width:127.0px;height:17px;display:flex;align-items:center;justify-content:center;font-size:11px;font-weight:bold;color:#fff;white-space:nowrap;"><span style="display:inline-block;">0</span></div><div style="left:965.5px;top:528px;width:127.0px;height:17px;display:flex;align-items:center;justify-content:center;font-size:11px;font-weight:bold;color:#fff;white-space:nowrap;"><span style="display:inline-block;">0</span></div><div style="left:965.5px;top:545px;width:127.0px;height:17.5px;display:flex;align-items:center;justify-content:center;font-size:11px;font-weight:bold;color:#fff;white-space:nowrap;"><span style="display:inline-block;">0</span></div><div style="left:965.5px;top:562.5px;width:127.0px;height:17.5px;display:flex;align-items:center;justify-content:center;font-size:11px;font-weight:bold;color:#fff;white-space:nowrap;"><span style="display:inline-block;">0</span></div><div style="left:965.5px;top:580px;width:127.0px;height:17.5px;display:flex;align-items:center;justify-content:center;font-size:11px;font-weight:bold;color:#fff;white-space:nowrap;"><span style="display:inline-block;">0</span></div><div style="left:965.5px;top:597.5px;width:127.0px;height:17.5px;display:flex;align-items:center;justify-content:center;font-size:11px;font-weight:bold;color:#fff;white-space:nowrap;"><span style="display:inline-block;">0</span></div><div style="left:965.5px;top:615px;width:127.0px;height:17px;display:flex;align-items:center;justify-content:center;font-size:11px;font-weight:bold;color:#fff;white-space:nowrap;"><span style="display:inline-block;">0</span></div><div style="left:965.5px;top:632px;width:127.0px;height:17px;display:flex;align-items:center;justify-content:center;font-size:11px;font-weight:bold;color:#fff;white-space:nowrap;"><span style="display:inline-block;">0</span></div><div style="left:965.5px;top:649px;width:127.0px;height:17px;display:flex;align-items:center;justify-content:center;font-size:11px;font-weight:bold;color:#fff;white-space:nowrap;"><span style="display:inline-block;">0</span></div><div style="left:965.5px;top:666px;width:127.0px;height:17px;display:flex;align-items:center;justify-content:center;font-size:11px;font-weight:bold;color:#fff;white-space:nowrap;"><span style="display:inline-block;">0</span></div><div style="left:965.5px;top:683px;width:127.0px;height:17px;display:flex;align-items:center;justify-content:center;font-size:11px;font-weight:bold;color:#fff;white-space:nowrap;"><span style="display:inline-block;">0</span></div><div style="left:965.5px;top:700px;width:127.0px;height:17px;display:flex;align-items:center;justify-content:center;font-size:11px;font-weight:bold;color:#fff;white-space:nowrap;"><span style="display:inline-block;">0</span></div><div style="left:965.5px;top:717px;width:127.0px;height:17px;display:flex;align-items:center;justify-content:center;font-size:11px;font-weight:bold;color:#fff;white-space:nowrap;"><span style="display:inline-block;">0</span></div><div style="left:965.5px;top:734px;width:127.0px;height:17px;display:flex;align-items:center;justify-content:center;font-size:11px;font-weight:bold;color:#fff;white-space:nowrap;"><span style="display:inline-block;">0</span></div><div style="left:965.5px;top:751px;width:127.0px;height:17px;display:flex;align-items:center;justify-content:center;font-size:11px;font-weight:bold;color:#fff;white-space:nowrap;"><span style="display:inline-block;">0</span></div><div style="left:965.5px;top:768px;width:127.0px;height:17px;display:flex;align-items:center;justify-content:center;font-size:11px;font-weight:bold;color:#fff;white-space:nowrap;"><span style="display:inline-block;">0</span></div><div style="left:965.5px;top:785px;width:127.0px;height:17px;display:flex;align-items:center;justify-content:center;font-size:11px;font-weight:bold;color:#fff;white-space:nowrap;"><span style="display:inline-block;">0</span></div><div style="left:965.5px;top:802px;width:127.0px;height:17px;display:flex;align-items:center;justify-content:center;font-size:11px;font-weight:bold;color:#fff;white-space:nowrap;"><span style="display:inline-block;">0</span></div><div style="left:965.5px;top:819px;width:127.0px;height:17px;display:flex;align-items:center;justify-content:center;font-size:11px;font-weight:bold;color:#fff;white-space:nowrap;"><span style="display:inline-block;">0</span></div><div style="left:965.5px;top:836px;width:127.0px;height:17px;display:flex;align-items:center;justify-content:center;font-size:11px;font-weight:bold;color:#fff;white-space:nowrap;"><span style="display:inline-block;">0</span></div><div style="left:965.5px;top:853px;width:127.0px;height:17px;display:flex;align-items:center;justify-content:center;font-size:11px;font-weight:bold;color:#fff;white-space:nowrap;"><span style="display:inline-block;">0</span></div><div style="left:965.5px;top:870px;width:127.0px;height:17px;display:flex;align-items:center;justify-content:center;font-size:11px;font-weight:bold;color:#fff;white-space:nowrap;"><span style="display:inline-block;">0</span></div><div style="left:965.5px;top:887px;width:127.0px;height:17px;display:flex;align-items:center;justify-content:center;font-size:11px;font-weight:bold;color:#fff;white-space:nowrap;"><span style="display:inline-block;">0</span></div><div style="left:1092.5px;top:443px;width:158.0px;height:17px;display:flex;align-items:center;justify-content:center;font-size:11px;font-weight:bold;color:#000;white-space:nowrap;"><span style="display:inline-block;">11,000,000</span></div><div style="left:1092.5px;top:460px;width:158.0px;height:17px;display:flex;align-items:center;justify-content:center;font-size:11px;font-weight:bold;color:#000;white-space:nowrap;"><span style="display:inline-block;">13,800,000</span></div><div style="left:1092.5px;top:477px;width:158.0px;height:17px;display:flex;align-items:center;justify-content:center;font-size:11px;font-weight:bold;color:#000;white-space:nowrap;"><span style="display:inline-block;">33,919,730</span></div><div style="left:1092.5px;top:494px;width:158.0px;height:17px;display:flex;align-items:center;justify-content:center;font-size:11px;font-weight:bold;color:#000;white-space:nowrap;"><span style="display:inline-block;">(40,000,000)</span></div><div style="left:1092.5px;top:511px;width:158.0px;height:17px;display:flex;align-items:center;justify-content:center;font-size:11px;font-weight:bold;color:#000;white-space:nowrap;"><span style="display:inline-block;">(10,000,000)</span></div><div style="left:1092.5px;top:528px;width:158.0px;height:17px;display:flex;align-items:center;justify-content:center;font-size:11px;font-weight:bold;color:#000;white-space:nowrap;"><span style="display:inline-block;">(10,000,000)</span></div><div style="left:1092.5px;top:597.5px;width:158.0px;height:17.5px;display:flex;align-items:center;justify-content:center;font-size:11px;font-weight:bold;color:#000;white-space:nowrap;"><span style="display:inline-block;">33,919,730</span></div><div style="left:1092.5px;top:615px;width:158.0px;height:17px;display:flex;align-items:center;justify-content:center;font-size:11px;font-weight:bold;color:#000;white-space:nowrap;"><span style="display:inline-block;">16,213,567</span></div><div style="left:1250.5px;top:443px;width:124.0px;height:17px;display:flex;align-items:center;justify-content:center;font-size:11px;font-weight:bold;color:#000;white-space:nowrap;"><span style="display:inline-block;">14,199,813</span></div><div style="left:1250.5px;top:460px;width:124.0px;height:17px;display:flex;align-items:center;justify-content:center;font-size:11px;font-weight:bold;color:#000;white-space:nowrap;"><span style="display:inline-block;">27,999,813</span></div><div style="left:1250.5px;top:477px;width:124.0px;height:17px;display:flex;align-items:center;justify-content:center;font-size:11px;font-weight:bold;color:#000;white-space:nowrap;"><span style="display:inline-block;">61,919,543</span></div><div style="left:1250.5px;top:494px;width:124.0px;height:17px;display:flex;align-items:center;justify-content:center;font-size:11px;font-weight:bold;color:#000;white-space:nowrap;"><span style="display:inline-block;">21,919,543</span></div><div style="left:1250.5px;top:511px;width:124.0px;height:17px;display:flex;align-items:center;justify-content:center;font-size:11px;font-weight:bold;color:#000;white-space:nowrap;"><span style="display:inline-block;">11,919,543</span></div><div style="left:1250.5px;top:528px;width:124.0px;height:17px;display:flex;align-items:center;justify-content:center;font-size:11px;font-weight:bold;color:#000;white-space:nowrap;"><span style="display:inline-block;">1,919,543</span></div><div style="left:1250.5px;top:545px;width:124.0px;height:17.5px;display:flex;align-items:center;justify-content:center;font-size:11px;font-weight:bold;color:#000;white-space:nowrap;"><span style="display:inline-block;">1,919,543</span></div><div style="left:1250.5px;top:562.5px;width:124.0px;height:17.5px;display:flex;align-items:center;justify-content:center;font-size:11px;font-weight:bold;color:#000;white-space:nowrap;"><span style="display:inline-block;">1,919,543</span></div><div style="left:1250.5px;top:580px;width:124.0px;height:17.5px;display:flex;align-items:center;justify-content:center;font-size:11px;font-weight:bold;color:#000;white-space:nowrap;"><span style="display:inline-block;">1,919,543</span></div><div style="left:1250.5px;top:597.5px;width:124.0px;height:17.5px;display:flex;align-items:center;justify-content:center;font-size:11px;font-weight:bold;color:#000;white-space:nowrap;"><span style="display:inline-block;">35,839,273</span></div><div style="left:1250.5px;top:615px;width:124.0px;height:17px;display:flex;align-items:center;justify-content:center;font-size:11px;font-weight:bold;color:#000;white-space:nowrap;"><span style="display:inline-block;">52,052,840</span></div><div style="left:1250.5px;top:632px;width:124.0px;height:17px;display:flex;align-items:center;justify-content:center;font-size:11px;font-weight:bold;color:#000;white-space:nowrap;"><span style="display:inline-block;">52,052,840</span></div><div style="left:1250.5px;top:649px;width:124.0px;height:17px;display:flex;align-items:center;justify-content:center;font-size:11px;font-weight:bold;color:#000;white-space:nowrap;"><span style="display:inline-block;">0</span></div><div style="left:1250.5px;top:666px;width:124.0px;height:17px;display:flex;align-items:center;justify-content:center;font-size:11px;font-weight:bold;color:#000;white-space:nowrap;"><span style="display:inline-block;">0</span></div><div style="left:1250.5px;top:683px;width:124.0px;height:17px;display:flex;align-items:center;justify-content:center;font-size:11px;font-weight:bold;color:#000;white-space:nowrap;"><span style="display:inline-block;">0</span></div><div style="left:1250.5px;top:700px;width:124.0px;height:17px;display:flex;align-items:center;justify-content:center;font-size:11px;font-weight:bold;color:#000;white-space:nowrap;"><span style="display:inline-block;">0</span></div><div style="left:1250.5px;top:717px;width:124.0px;height:17px;display:flex;align-items:center;justify-content:center;font-size:11px;font-weight:bold;color:#000;white-space:nowrap;"><span style="display:inline-block;">0</span></div><div style="left:1250.5px;top:734px;width:124.0px;height:17px;display:flex;align-items:center;justify-content:center;font-size:11px;font-weight:bold;color:#000;white-space:nowrap;"><span style="display:inline-block;">0</span></div><div style="left:1250.5px;top:751px;width:124.0px;height:17px;display:flex;align-items:center;justify-content:center;font-size:11px;font-weight:bold;color:#000;white-space:nowrap;"><span style="display:inline-block;">0</span></div><div style="left:1250.5px;top:768px;width:124.0px;height:17px;display:flex;align-items:center;justify-content:center;font-size:11px;font-weight:bold;color:#000;white-space:nowrap;"><span style="display:inline-block;">0</span></div><div style="left:1250.5px;top:785px;width:124.0px;height:17px;display:flex;align-items:center;justify-content:center;font-size:11px;font-weight:bold;color:#000;white-space:nowrap;"><span style="display:inline-block;">0</span></div><div style="left:1250.5px;top:802px;width:124.0px;height:17px;display:flex;align-items:center;justify-content:center;font-size:11px;font-weight:bold;color:#000;white-space:nowrap;"><span style="display:inline-block;">0</span></div><div style="left:1250.5px;top:819px;width:124.0px;height:17px;display:flex;align-items:center;justify-content:center;font-size:11px;font-weight:bold;color:#000;white-space:nowrap;"><span style="display:inline-block;">0</span></div><div style="left:1250.5px;top:836px;width:124.0px;height:17px;display:flex;align-items:center;justify-content:center;font-size:11px;font-weight:bold;color:#000;white-space:nowrap;"><span style="display:inline-block;">0</span></div><div style="left:1250.5px;top:853px;width:124.0px;height:17px;display:flex;align-items:center;justify-content:center;font-size:11px;font-weight:bold;color:#000;white-space:nowrap;"><span style="display:inline-block;">0</span></div><div style="left:1250.5px;top:870px;width:124.0px;height:17px;display:flex;align-items:center;justify-content:center;font-size:11px;font-weight:bold;color:#000;white-space:nowrap;"><span style="display:inline-block;">0</span></div><div style="left:1250.5px;top:887px;width:124.0px;height:17px;display:flex;align-items:center;justify-content:center;font-size:11px;font-weight:bold;color:#000;white-space:nowrap;"><span style="display:inline-block;">0</span></div><div style="left:35px;top:460px;width:122px;height:17px;overflow:hidden"><div style="left:0.5px;top:1px;height:17px;line-height:17px;font-size:11px;font-weight:bold;color:#1155cc;white-space:nowrap;"><u style="text-decoration-skip-ink:none">ps://imghostr.com/604f7</u></div></div><div style="left:52px;top:477px;width:105px;height:17px;display:flex;align-items:center;justify-content:center;font-size:11px;font-weight:bold;color:#000;white-space:nowrap;"><span style="display:inline-block;">klop</span></div><div style="left:52px;top:494px;width:105px;height:17px;display:flex;align-items:center;justify-content:center;font-size:11px;font-weight:bold;color:#000;white-space:nowrap;"><span style="display:inline-block;">ss ada di hp</span></div><div style="left:52px;top:511px;width:105px;height:17px;display:flex;align-items:center;justify-content:center;font-size:11px;font-weight:bold;color:#000;white-space:nowrap;"><span style="display:inline-block;">19:11:50</span></div><div style="left:157px;top:460px;width:118px;height:17px;display:flex;align-items:center;justify-content:center;font-size:11px;font-weight:bold;color:#000;white-space:nowrap;"><span style="display:inline-block;">17:10:19</span></div><div style="left:157px;top:494px;width:118px;height:17px;display:flex;align-items:center;justify-content:center;font-size:11px;font-weight:bold;color:#000;white-space:nowrap;"><span style="display:inline-block;">19:09:47</span></div><div style="left:157px;top:511px;width:118px;height:17px;display:flex;align-items:center;justify-content:center;font-size:11px;font-weight:bold;color:#000;white-space:nowrap;"><span style="display:inline-block;">19:09:47</span></div><div style="left:157px;top:528px;width:118px;height:17px;display:flex;align-items:center;justify-content:center;font-size:11px;font-weight:bold;color:#000;white-space:nowrap;"><span style="display:inline-block;">19:11:18</span></div><div style="left:157px;top:597.5px;width:118px;height:17.5px;display:flex;align-items:center;justify-content:center;font-size:11px;font-weight:bold;color:#000;white-space:nowrap;"><span style="display:inline-block;">00:57:27</span></div><div style="left:157px;top:615px;width:118px;height:17px;display:flex;align-items:center;justify-content:center;font-size:11px;font-weight:bold;color:#000;white-space:nowrap;"><span style="display:inline-block;">00:57:27</span></div><div style="left:275px;top:494px;width:119px;height:17px;display:flex;align-items:center;justify-content:center;font-size:11px;font-weight:normal;color:#000;white-space:nowrap;"><span style="display:inline-block;">6631632723</span></div><div style="left:275px;top:511px;width:119px;height:17px;display:flex;align-items:center;justify-content:center;font-size:11px;font-weight:normal;color:#000;white-space:nowrap;"><span style="display:inline-block;">6631632723</span></div><div style="left:275px;top:528px;width:119px;height:17px;display:flex;align-items:center;justify-content:center;font-size:11px;font-weight:normal;color:#000;white-space:nowrap;"><span style="display:inline-block;">4850575211</span></div><div style="left:275px;top:632px;width:119px;height:17px;display:flex;align-items:center;justify-content:center;font-size:11px;font-weight:normal;color:#000;white-space:nowrap;"><span style="display:inline-block;">6370494361</span></div><div style="left:394px;top:462px;width:235px;height:17px;display:flex;align-items:center;justify-content:flex-start;font-size:9.5px;font-weight:bold;color:#000;white-space:nowrap;padding-left:3px;box-sizing:border-box"><span style="display:inline-block;transform:scaleX(1.023);transform-origin:left;-webkit-text-stroke:0.4px currentColor;">DANA MASUK DARI BCA GII / YUNITA</span></div><div style="left:394px;top:477px;width:235px;height:17px;display:flex;align-items:center;justify-content:flex-start;font-size:11px;font-weight:bold;color:#000;white-space:nowrap;padding-left:3px;box-sizing:border-box"><span style="display:inline-block;transform:scaleX(1.152);transform-origin:left;-webkit-text-stroke:0.4px currentColor;">MINERA QRIS</span></div><div style="left:394px;top:597.5px;width:235px;height:17.5px;display:flex;align-items:center;justify-content:flex-start;font-size:11px;font-weight:bold;color:#000;white-space:nowrap;padding-left:3px;box-sizing:border-box"><span style="display:inline-block;transform:scaleX(1.152);transform-origin:left;-webkit-text-stroke:0.4px currentColor;">MINERA QRIS</span></div><div style="left:394px;top:615px;width:235px;height:17px;display:flex;align-items:center;justify-content:flex-start;font-size:11px;font-weight:bold;color:#000;white-space:nowrap;padding-left:3px;box-sizing:border-box"><span style="display:inline-block;transform:scaleX(1.152);transform-origin:left;-webkit-text-stroke:0.4px currentColor;">MINERA QRIS</span></div><div style="left:394px;top:494px;width:366px;height:17px;display:flex;align-items:center;justify-content:flex-start;font-size:11px;font-weight:bold;color:#000;white-space:nowrap;padding-left:3px;box-sizing:border-box"><span style="display:inline-block;transform:scaleX(1.142);transform-origin:left;-webkit-text-stroke:0.4px currentColor;">pengiriman dana ke KAS BCA / Diva Nabila Aprianti</span></div><div style="left:394px;top:511px;width:366px;height:17px;display:flex;align-items:center;justify-content:flex-start;font-size:11px;font-weight:bold;color:#000;white-space:nowrap;padding-left:3px;box-sizing:border-box"><span style="display:inline-block;transform:scaleX(1.142);transform-origin:left;-webkit-text-stroke:0.4px currentColor;">pengiriman dana ke KAS BCA / Diva Nabila Aprianti</span></div><div style="left:394px;top:528px;width:366px;height:17px;display:flex;align-items:center;justify-content:flex-start;font-size:11px;font-weight:bold;color:#000;white-space:nowrap;padding-left:3px;box-sizing:border-box"><span style="display:inline-block;transform:scaleX(1.137);transform-origin:left;-webkit-text-stroke:0.4px currentColor;">pengiriman dana ke KAS BCA / M Irvan Rojab</span></div><div style="left:394px;top:632px;width:366px;height:17px;display:flex;align-items:center;justify-content:flex-start;font-size:11px;font-weight:bold;color:#000;white-space:nowrap;padding-left:3px;box-sizing:border-box"><span style="display:inline-block;transform:scaleX(1.139);transform-origin:left;-webkit-text-stroke:0.4px currentColor;">pengriman dane ke bank KAS BCA / RIDWAN KASIM</span></div><div style="left:761px;top:649px;width:84px;height:17px;display:flex;align-items:center;justify-content:center;font-size:11px;font-weight:bold;color:#ff0000;white-space:nowrap;"><span style="display:inline-block;">52,052,840</span></div><div style="left:1374.5px;top:477px;width:90.0px;height:17px;display:flex;align-items:center;justify-content:center;font-size:11px;font-weight:bold;color:#fff;white-space:nowrap;"><span style="display:inline-block;">17:26:30</span></div><div style="left:1374.5px;top:494px;width:90.0px;height:17px;display:flex;align-items:center;justify-content:center;font-size:11px;font-weight:bold;color:#fff;white-space:nowrap;"><span style="display:inline-block;">ss di hp</span></div><div style="left:1375px;top:460px;width:108px;height:17px;overflow:hidden"><div style="left:0px;top:1px;height:17px;line-height:17px;font-size:11px;font-weight:bold;color:#fff;white-space:nowrap;"><u style="text-decoration-skip-ink:none">ekshot.app/v/ntocHG</u></div></div><div style="left:760px;top:665.5px;width:85px;height:18px;box-sizing:border-box;border:2px solid #1a73e8"></div><div style="left:840px;top:679px;width:10px;height:10px;border-radius:50%;background:#0b57d0;border:1px solid #fff;box-sizing:border-box"></div></div></div><div style="left:0px;top:903px;width:1909px;height:14px;background:#ffffff;"></div><div style="left:0px;top:903px;width:34px;height:14px;background:#f8f9fa;"></div><div style="left:0px;top:903px;width:1909px;height:1px;background:#e1e3e1;"></div><div style="left:0px;top:916px;width:1919px;height:1px;background:#e1e3e1;"></div><div style="left:1909px;top:194px;width:10px;height:709px;background:#ffffff;"></div><div style="left:1910px;top:521px;width:9px;height:26px;border-radius:5px;background:#dadce0"></div><div style="left:1909px;top:868px;width:10px;height:1px;background:#e1e3e1;"></div><svg style="left:1910px;top:874px" width="8" height="6" viewBox="0 0 8 6"><path d="M0 5l4-4 4 4z" fill="#80868b"/></svg><svg style="left:1910px;top:893px" width="8" height="6" viewBox="0 0 8 6"><path d="M0 1l4 4 4-4z" fill="#80868b"/></svg><div style="left:1880px;top:903px;width:1px;height:13px;background:#e1e3e1;"></div><div style="left:1895px;top:903px;width:1px;height:13px;background:#e1e3e1;"></div><svg style="left:1883px;top:906px" width="6" height="8" viewBox="0 0 6 8"><path d="M5 0L1 4l4 4z" fill="#80868b"/></svg><svg style="left:1899px;top:906px" width="6" height="8" viewBox="0 0 6 8"><path d="M1 0l4 4-4 4z" fill="#80868b"/></svg><div style="left:1538px;top:146px;width:337px;height:68px;background:#fff;box-sizing:border-box;border:1px solid #dadce0;border-top:none;border-radius:0 0 9px 9px;box-shadow:0 1px 2px rgba(0,0,0,.08)"></div><div style="left:1551px;top:167.5px;width:170px;height:35px;box-sizing:border-box;border:1px solid #dadce0;border-radius:4px;background:#fff"></div><div style="left:1560px;top:176px;height:18px;line-height:18px;font-size:13px;font-weight:normal;color:#1f1f1f;white-space:nowrap;transform:scaleX(1.024);transform-origin:left center;">1790398358</div><div style="left:1658px;top:176px;height:18px;line-height:18px;font-size:13.5px;font-weight:normal;color:#5f6368;white-space:nowrap;transform:scaleX(1.020);transform-origin:left center;">1 dari 1</div><svg style="left:1732.0px;top:173.0px;" width="20" height="20" viewBox="0 0 24 24"><path fill="#444746" d="M12 8l-6 6 1.41 1.41L12 10.83l4.59 4.58L18 14z"/></svg><svg style="left:1766.0px;top:173.0px;" width="20" height="20" viewBox="0 0 24 24"><path fill="#444746" d="M16.59 8.59L12 13.17 7.41 8.59 6 10l6 6 6-6z"/></svg><div style="left:1801px;top:171px;width:1px;height:24px;background:#dadce0;"></div><svg style="left:1811.0px;top:173.0px;" width="20" height="20" viewBox="0 0 24 24"><path fill="#444746" d="M12 8c1.1 0 2-.9 2-2s-.9-2-2-2-2 .9-2 2 .9 2 2 2zm0 2c-1.1 0-2 .9-2 2s.9 2 2 2 2-.9 2-2-.9-2-2-2zm0 6c-1.1 0-2 .9-2 2s.9 2 2 2 2-.9 2-2-.9-2-2-2z"/></svg><svg style="left:1842.0px;top:174.0px;" width="20" height="20" viewBox="0 0 24 24"><path fill="#444746" d="M19 6.41L17.59 5 12 10.59 6.41 5 5 6.41 10.59 12 5 17.59 6.41 19 12 13.41 17.59 19 19 17.59 13.41 12z"/></svg><div style="left:0px;top:917px;width:1919px;height:36px;background:#f9fbfd;"></div><svg style="left:54.0px;top:928.0px;" width="16" height="16" viewBox="0 0 24 24"><path fill="#444746" d="M19 13h-6v6h-2v-6H5v-2h6V5h2v6h6v2z"/></svg><svg style="left:93.0px;top:927.0px;" width="18" height="18" viewBox="0 0 24 24"><path fill="#444746" d="M3 18h18v-2H3v2zm0-5h18v-2H3v2zm0-7v2h18V6H3z"/></svg><div style="left:125px;top:925px;width:1px;height:23px;background:#c7c7c7;"></div><svg style="left:123.0px;top:929.0px;" width="14" height="14" viewBox="0 0 24 24"><path fill="#444746" d="M7 10l5 5 5-5z"/></svg><div style="left:127px;top:950px;width:18px;height:3px;background:#ff0000;"></div><div style="left:147px;top:950px;width:315px;height:3px;background:#ff00ff;"></div><div style="left:159px;top:927px;height:18px;line-height:18px;font-size:14.6px;font-weight:normal;color:#444746;white-space:nowrap;transform:scaleX(1.005);transform-origin:left center;">KAS BESAR DANAMON / Teguh Sunaryo</div><svg style="left:437.0px;top:927.0px;" width="18" height="18" viewBox="0 0 24 24"><path fill="#444746" d="M7 10l5 5 5-5z"/></svg><div style="left:464px;top:950px;width:334px;height:3px;background:#ff00ff;"></div><div style="left:476px;top:927px;height:18px;line-height:18px;font-size:14.6px;font-weight:normal;color:#444746;white-space:nowrap;transform:scaleX(1.039);transform-origin:left center;">KAS BESAR BCA / Fajar Adhitya yudhistira</div><svg style="left:773.0px;top:927.0px;" width="18" height="18" viewBox="0 0 24 24"><path fill="#444746" d="M7 10l5 5 5-5z"/></svg><div style="left:799px;top:950px;width:240px;height:3px;background:#ff00ff;"></div><div style="left:1040px;top:950px;width:258px;height:3px;background:#ff0000;"></div><div style="left:1078px;top:927px;height:18px;line-height:18px;font-size:14.6px;font-weight:normal;color:#444746;white-space:nowrap;transform:scaleX(1.035);transform-origin:left center;">KAS BCA / Teguh Wahyudin</div><div style="left:1051px;top:924px;width:22px;height:22px;border-radius:50%;background:#e1e4e8;color:#444746;font-size:12px;line-height:22px;text-align:center">2</div><svg style="left:1273.0px;top:927.0px;" width="18" height="18" viewBox="0 0 24 24"><path fill="#444746" d="M7 10l5 5 5-5z"/></svg><div style="left:1299px;top:950px;width:193px;height:3px;background:#ff00ff;"></div><div style="left:1311px;top:927px;height:18px;line-height:18px;font-size:14.6px;font-weight:normal;color:#444746;white-space:nowrap;transform:scaleX(0.987);transform-origin:left center;">KAS BCA / SAHRUDIN</div><svg style="left:1467.0px;top:927.0px;" width="18" height="18" viewBox="0 0 24 24"><path fill="#444746" d="M7 10l5 5 5-5z"/></svg><div style="left:1493px;top:950px;width:194px;height:3px;background:#0000ff;"></div><div style="left:1530px;top:927px;width:157px;height:18px;overflow:hidden"><div style="left:0px;top:0px;height:18px;line-height:18px;font-size:14.6px;font-weight:normal;color:#444746;white-space:nowrap;transform:scaleX(0.982);transform-origin:left center;">KAS BCA / SAHRUL SAI</div></div><div style="left:1503px;top:924px;width:22px;height:22px;border-radius:50%;background:#e1e4e8;color:#444746;font-size:12px;line-height:22px;text-align:center">9</div><div style="left:1687px;top:926px;width:1px;height:21px;background:#444746;"></div><div style="left:798px;top:917px;width:241px;height:33px;background:#e1e9f7;"></div><div style="left:798px;top:950px;width:241px;height:3px;background:#ff00ff;"></div><div style="left:810px;top:927px;width:198px;height:17px;background:#ff9c3a"></div><div style="left:810px;top:927px;width:198px;height:17px;display:flex;align-items:center;justify-content:center;font-size:14.6px;font-weight:bold;color:#000;white-space:nowrap;"><span style="display:inline-block;transform:scaleX(0.995);transform-origin:center;">KAS BCA / NOVI OCTAVIANI</span></div><svg style="left:1014.0px;top:927.0px;" width="18" height="18" viewBox="0 0 24 24"><path fill="#0b57d0" d="M7 10l5 5 5-5z"/></svg><svg style="left:1701.0px;top:926.0px;" width="20" height="20" viewBox="0 0 24 24"><path fill="#444746" d="M15.41 7.41L14 6l-6 6 6 6 1.41-1.41L10.83 12z"/></svg><svg style="left:1740.0px;top:926.0px;" width="20" height="20" viewBox="0 0 24 24"><path fill="#444746" d="M10 6L8.59 7.41 13.17 12l-4.58 4.59L10 18l6-6z"/></svg><svg style="left:1881.0px;top:926.0px;" width="20" height="20" viewBox="0 0 24 24"><path fill="#444746" d="M15.41 7.41L14 6l-6 6 6 6 1.41-1.41L10.83 12z"/></svg><div style="left:0px;top:953px;width:1919px;height:39px;background:#1c1e24;"></div><svg style="left:15px;top:963px" width="18" height="18" viewBox="0 0 18 18"><path fill="#fff" d="M0 0h8.5v8.5H0zM9.5 0H18v8.5H9.5zM0 9.5h8.5V18H0zM9.5 9.5H18V18H9.5z"/></svg><svg style="left:62px;top:960px" width="26" height="26" viewBox="62 960 26 26"><defs><linearGradient id="cpa" x1="0" y1="0" x2="0" y2="1"><stop offset="0" stop-color="#2ab8ff"/><stop offset=".55" stop-color="#3fb56a"/><stop offset="1" stop-color="#ffd400"/></linearGradient><linearGradient id="cpb" x1="0" y1="0" x2="0" y2="1"><stop offset="0" stop-color="#b05cf5"/><stop offset=".5" stop-color="#f0508a"/><stop offset="1" stop-color="#ffb060"/></linearGradient></defs><path fill="url(#cpa)" d="M68.5 963H79c1.5 0 2 1 1.6 2.2L75.5 976c-.4 1-1.2 1.5-2.2 1.5H65.5c-1.2 0-1.8-.9-1.5-2L66.8 964.5c.3-1 1-1.5 1.7-1.5z"/><path fill="url(#cpb)" d="M77 968.5H84.5c1.2 0 1.8.9 1.5 2L82.6 981.5c-.3 1-1 1.7-2 1.7H71c-1.5 0-2-1-1.6-2.2L74.5 970c.4-1 1.3-1.5 2.5-1.5z"/></svg><svg style="left:111px;top:960px" width="27" height="27" viewBox="111 960 27 27"><defs><linearGradient id="eda" x1="0" y1="0" x2="1" y2="1"><stop offset="0" stop-color="#35c1f1"/><stop offset="1" stop-color="#4fdc5a"/></linearGradient></defs><circle cx="124" cy="973" r="12" fill="#1a86d8"/><path fill="url(#eda)" d="M112.3 970.5A12 12 0 0 1 136 973c0 3-2.5 4.5-5 4.5-2.2 0-4-1-4-3.5 0-2-1.8-4-4.5-4-3 0-4.5 2-4.5 4.2-1-2.6-2.8-4-5.7-3.7z"/><path fill="#0f5fae" d="M118 974.5c0 5 4 9 9 9 3.5 0 6.5-2 8-4.5-2 1.5-4.5 2-6.8 1.2-3.3-1-5.2-3.5-5.2-6.2z" opacity=".85"/><circle cx="123.5" cy="974" r="2.6" fill="#1c1e24"/></svg><svg style="left:160px;top:962px" width="24" height="20" viewBox="0 0 24 20"><path fill="#e8a820" d="M0 2a2 2 0 0 1 2-2h6l2 2h12a2 2 0 0 1 2 2v14a2 2 0 0 1-2 2H2a2 2 0 0 1-2-2z"/><path fill="#ffd35a" d="M0 6h24v12a2 2 0 0 1-2 2H2a2 2 0 0 1-2-2z"/><path fill="#2f7fd8" d="M7 12h10v8h-3v-4h-4v4H7z"/></svg><div style="left:198px;top:953px;width:47px;height:39px;background:#9a5f2a;"></div><div style="left:198px;top:990px;width:47px;height:2px;background:#e08a3a;"></div><svg style="left:210px;top:961px" width="23" height="22" viewBox="0 0 23 22"><path fill="#ffd400" d="M0 0h23v14l-8 8H0z"/><path fill="#333" d="M15 22v-6a2 2 0 0 1 2-2h6z"/></svg><div style="left:258px;top:960px;width:24px;height:24px;border-radius:50%;background:#e0161e"></div><div style="left:265px;top:963px;width:10px;height:18px;border-radius:50%;background:#1c1e24"></div><div style="left:296px;top:953px;width:48px;height:39px;background:#3b3d42;"></div><div style="left:308px;top:960px;width:24px;height:24px;border-radius:50%;background:conic-gradient(from -30deg,#ea4335 0 33%,#fbbc04 33% 66%,#34a853 66% 100%)"></div><div style="left:314px;top:966px;width:12px;height:12px;border-radius:50%;background:#fff"></div><div style="left:316px;top:968px;width:8px;height:8px;border-radius:50%;background:#4285f4"></div><div style="left:321px;top:973px;width:14px;height:14px;border-radius:50%;background:#2a2f55;border:1px solid #1c1e24"></div><div style="left:357px;top:960px;width:24px;height:24px;border-radius:50%;background:conic-gradient(from -30deg,#ea4335 0 33%,#fbbc04 33% 66%,#34a853 66% 100%)"></div><div style="left:363px;top:966px;width:12px;height:12px;border-radius:50%;background:#fff"></div><div style="left:365px;top:968px;width:8px;height:8px;border-radius:50%;background:#4285f4"></div><div style="left:370px;top:973px;width:14px;height:14px;border-radius:50%;background:#c9b27a;border:1px solid #1c1e24"></div><div style="left:406px;top:961px;width:23px;height:22px;border-radius:5px;background:#06c755"></div><div style="left:410px;top:966px;font-size:7px;font-weight:bold;color:#fff">LINE</div><div style="left:419px;top:973px;width:14px;height:14px;border-radius:50%;background:#2a2f55;border:1px solid #1c1e24"></div><div style="left:251px;top:990px;width:39px;height:2px;background:#78b7e8;"></div><div style="left:296px;top:990px;width:48px;height:2px;background:#78b7e8;"></div><div style="left:349px;top:990px;width:41px;height:2px;background:#78b7e8;"></div><div style="left:398px;top:990px;width:40px;height:2px;background:#78b7e8;"></div><svg style="left:1506px;top:962px" width="28" height="22" viewBox="0 0 28 22"><circle cx="18" cy="7" r="6" fill="#f5a623"/><path fill="#b9d5f5" d="M6 21a5 5 0 0 1 0-10 7 7 0 0 1 13-1 5.5 5.5 0 0 1 2 11z"/></svg><div style="left:1540px;top:963px;font-size:14px;color:#fff;line-height:18px;white-space:nowrap">26°C&nbsp; Mostly cloudy</div><svg style="left:1687px;top:965px" width="16" height="12" viewBox="0 0 16 12"><path fill="none" stroke="#fff" stroke-width="1.3" d="M2 9l6-6 6 6"/></svg><svg style="left:1710px;top:963px" width="18" height="18" viewBox="0 0 18 18"><path fill="none" stroke="#fff" stroke-width="1.2" d="M3 5h8v8H3zM11 8l4-2v6l-4-2M5 2h4M5 16h4"/></svg><svg style="left:1734px;top:962px" width="18" height="18" viewBox="0 0 18 18"><path fill="none" stroke="#fff" stroke-width="1.2" d="M2 4h14v10H2zM5 9a3 3 0 0 1 5-2M12 9a3 3 0 0 1-5 2"/><circle cx="13" cy="15" r="3" fill="#2f86e8"/></svg><svg style="left:1758px;top:962px" width="18" height="18" viewBox="0 0 18 18"><path fill="none" stroke="#fff" stroke-width="1.2" d="M5 4h12v9H5zM11 13v3M8 16h6M1 2h6v6H1"/></svg><svg style="left:1782px;top:963px" width="18" height="18" viewBox="0 0 18 18"><path fill="none" stroke="#fff" stroke-width="1.2" d="M2 7h3l4-3v10l-4-3H2z"/><circle cx="13" cy="12" r="3.5" fill="#e81123"/><path stroke="#fff" stroke-width="1" d="M11.5 10.5l3 3M14.5 10.5l-3 3"/></svg><div style="left:1800px;top:955px;width:70px;font-size:12.5px;color:#fff;line-height:18px;text-align:center;white-space:nowrap">9:34 AM<br>1/16/2026</div><svg style="left:1877px;top:962px" width="20" height="18" viewBox="0 0 20 18"><path fill="#fff" d="M1 1h18v12H8l-4 4v-4H1z"/><path stroke="#1c1e24" stroke-width="1.3" d="M4 5h12M4 8h12M4 11h8"/></svg><div style="left:1880px;top:967px;width:23px;height:20px;border-radius:50%;background:#2a2c33;border:1px solid #888;box-sizing:border-box;color:#fff;font-size:12px;font-weight:bold;line-height:18px;text-align:center">20</div><div style="left:1915px;top:953px;width:1px;height:39px;background:#5a5c62;"></div></body></html>
